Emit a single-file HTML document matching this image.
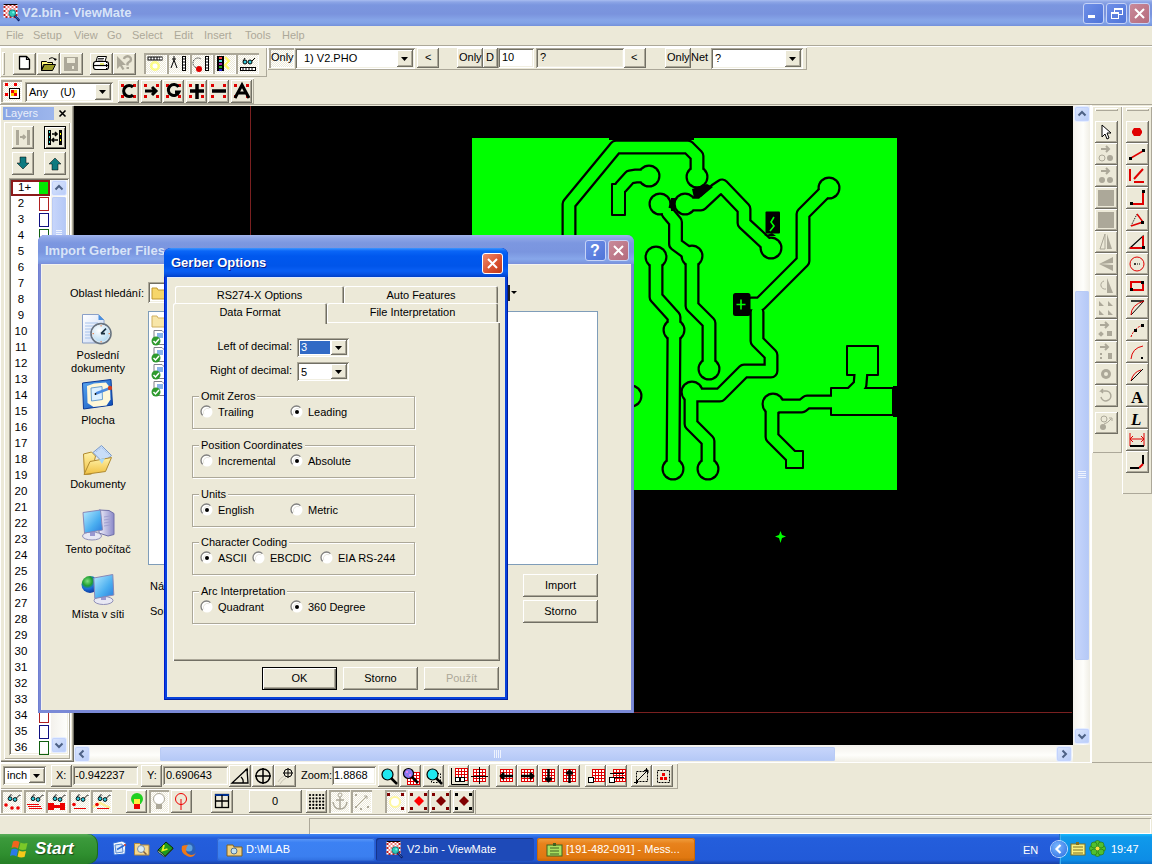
<!DOCTYPE html><html><head><meta charset="utf-8"><style>
*{margin:0;padding:0;box-sizing:border-box}
html,body{width:1152px;height:864px;overflow:hidden;background:#ECE9D8;font-family:"Liberation Sans",sans-serif;font-size:11px;color:#000}
.a{position:absolute}
.t{position:absolute;white-space:nowrap;line-height:13px}
.rb{position:absolute;background:#ECE9D8;box-shadow:inset -1px -1px #716F64,inset 1px 1px #FFF,inset -2px -2px #ACA899}
.sk{position:absolute;background:#fff;box-shadow:inset 1px 1px #ACA899,inset -1px -1px #FFF,inset 2px 2px #716F64,inset -2px -2px #F1EFE2}
.ck{position:absolute;background-color:#F5F4EE;box-shadow:inset 1px 1px #716F64,inset -1px -1px #FFF,inset 2px 2px #ACA899}
.etch{position:absolute;border:1px solid #ACA899;box-shadow:1px 1px #FFF, inset 1px 1px #FFF}
svg{position:absolute;overflow:visible}
</style></head><body>
<div class="a" style="left:0;top:0;width:1152px;height:26px;background:linear-gradient(to bottom,#A9BDF0 0px,#8CA5E6 2px,#7B96DF 5px,#7A93DD 14px,#86A5E8 20px,#82A2E6 23px,#7390DA 26px)"></div>
<svg style="left:3px;top:3px" width="18" height="19" viewBox="0 0 18 19"><g transform="translate(0.5,1)"><rect x="0" y="0" width="14" height="13.5" fill="#fff"/><rect x="0" y="2" width="2" height="2" fill="#C02020"/><rect x="0" y="6" width="2" height="2" fill="#C02020"/><rect x="0" y="10" width="2" height="2" fill="#C02020"/><rect x="2" y="0" width="2" height="2" fill="#C02020"/><rect x="2" y="4" width="2" height="2" fill="#F08080"/><rect x="2" y="8" width="2" height="2" fill="#F08080"/><rect x="2" y="12" width="2" height="2" fill="#C02020"/><rect x="4" y="2" width="2" height="2" fill="#F08080"/><rect x="4" y="6" width="2" height="2" fill="#F08080"/><rect x="4" y="10" width="2" height="2" fill="#F08080"/><rect x="6" y="0" width="2" height="2" fill="#C02020"/><rect x="6" y="4" width="2" height="2" fill="#F08080"/><rect x="6" y="8" width="2" height="2" fill="#F08080"/><rect x="6" y="12" width="2" height="2" fill="#C02020"/><rect x="8" y="2" width="2" height="2" fill="#F08080"/><rect x="8" y="6" width="2" height="2" fill="#F08080"/><rect x="8" y="10" width="2" height="2" fill="#F08080"/><rect x="10" y="0" width="2" height="2" fill="#C02020"/><rect x="10" y="4" width="2" height="2" fill="#F08080"/><rect x="10" y="8" width="2" height="2" fill="#F08080"/><rect x="10" y="12" width="2" height="2" fill="#C02020"/><rect x="12" y="2" width="2" height="2" fill="#C02020"/><rect x="12" y="6" width="2" height="2" fill="#C02020"/><rect x="12" y="10" width="2" height="2" fill="#C02020"/><rect x="0" y="0" width="14" height="1" fill="#100000"/></g><circle cx="9.3" cy="10.2" r="3.4" fill="#30C8B8" stroke="#0A6A70" stroke-width="0.8"/><circle cx="10.3" cy="9.4" r="1.1" fill="#70F8F0"/><path d="M11.8 12.8l4.5 5" stroke="#0A1A60" stroke-width="2.2"/><path d="M12.3 13.3l3.5 3.8" stroke="#4A8AE0" stroke-width="0.7"/></svg>
<div class="t" style="left:22px;top:5px;font-size:13px;font-weight:bold;color:#D8E4F8;line-height:16px">V2.bin - ViewMate</div>
<div class="a" style="left:1083px;top:3px;width:21px;height:21px;border-radius:3px;border:1px solid #C6D3F7;background:linear-gradient(135deg,#6E8FE8,#4F74D8)"></div><div class="a" style="left:1088px;top:15px;width:7px;height:3px;background:#fff"></div>
<div class="a" style="left:1106px;top:3px;width:21px;height:21px;border-radius:3px;border:1px solid #C6D3F7;background:linear-gradient(135deg,#6E8FE8,#4F74D8)"></div><div class="a" style="left:1114px;top:8px;width:9px;height:7px;border:1px solid #fff;border-top-width:2px"></div><div class="a" style="left:1111px;top:12px;width:8px;height:7px;border:1px solid #fff;border-top-width:2px;background:#5C80DE"></div>
<div class="a" style="left:1129px;top:3px;width:21px;height:21px;border-radius:3px;border:1px solid #C6D3F7;background:linear-gradient(135deg,#C98A9A,#B56B7C)"></div><svg style="left:1129px;top:3px" width="21" height="21"><path d="M6 6L15 15M15 6L6 15" stroke="#fff" stroke-width="2"/></svg>
<div class="t" style="left:6px;top:29px;color:#ACA899">File</div>
<div class="t" style="left:33px;top:29px;color:#ACA899">Setup</div>
<div class="t" style="left:74px;top:29px;color:#ACA899">View</div>
<div class="t" style="left:107px;top:29px;color:#ACA899">Go</div>
<div class="t" style="left:132px;top:29px;color:#ACA899">Select</div>
<div class="t" style="left:174px;top:29px;color:#ACA899">Edit</div>
<div class="t" style="left:204px;top:29px;color:#ACA899">Insert</div>
<div class="t" style="left:245px;top:29px;color:#ACA899">Tools</div>
<div class="t" style="left:282px;top:29px;color:#ACA899">Help</div>
<div class="a" style="left:0;top:45px;width:1152px;height:1px;background:#ACA899"></div>
<div class="a" style="left:0;top:46px;width:1152px;height:1px;background:#fff"></div>
<div class="a" style="left:74px;top:106px;width:999px;height:639px;background:#000"></div>
<div class="a" style="left:0;top:104px;width:1152px;height:1px;background:#ACA899"></div>
<div class="a" style="left:250px;top:106px;width:1px;height:140px;background:#7A2020"></div>
<div class="a" style="left:600px;top:712px;width:472px;height:1px;background:#7A2020"></div>
<div class="a" style="left:0px;top:47px;width:267px;height:30px;box-shadow:inset 1px 1px #FFF,inset -1px -1px #ACA899"></div>
<div class="a" style="left:2px;top:52px;width:3px;height:23px;box-shadow:inset 1px 1px #FFF,inset -1px -1px #ACA899"></div>
<div class="rb" style="left:13px;top:53px;width:23px;height:22px"></div>
<svg style="left:13px;top:53px" width="23" height="22" viewBox="0 0 23 22"><path d="M6.5 3.5h7l3 3v9.5h-10z" fill="#fff" stroke="#000" stroke-width="1.3" stroke-linejoin="round"/><path d="M13.5 3.5v3h3" fill="none" stroke="#000" stroke-width="1.2"/></svg>
<div class="rb" style="left:37px;top:53px;width:23px;height:22px"></div>
<svg style="left:37px;top:53px" width="23" height="22" viewBox="0 0 23 22"><path d="M4.5 8.5h5l1 1h5v2h-9l-2 6z" fill="#FFF87A" stroke="#000"/><path d="M4.5 17.5l3-6h11l-3 6z" fill="#9C9C2A" stroke="#000"/><path d="M12 6q4-3 6 1" fill="none" stroke="#000"/><path d="M17 5l1 3 2-2" fill="#000"/></svg>
<div class="rb" style="left:60px;top:53px;width:23px;height:22px"></div>
<svg style="left:60px;top:53px" width="23" height="22" viewBox="0 0 23 22"><rect x="4" y="4" width="14" height="14" fill="#ACA899"/><rect x="7" y="5" width="8" height="5" fill="#ECE9D8"/><rect x="12" y="13" width="2" height="3" fill="#ECE9D8"/></svg>
<div class="rb" style="left:90px;top:53px;width:23px;height:22px"></div>
<svg style="left:90px;top:53px" width="23" height="22" viewBox="0 0 23 22"><path d="M7.5 3.5h9l-1.5 5h-9z" fill="#fff" stroke="#000"/><path d="M8 5.5h6M7.5 7h6" stroke="#000" stroke-width="0.8"/><rect x="3.5" y="8.5" width="15" height="8" rx="2.5" fill="#fff" stroke="#000" stroke-width="1.2"/><path d="M4 12.5h14" stroke="#000" stroke-width="1.2"/><path d="M10 11h4" stroke="#D8E020" stroke-width="1.2"/><path d="M16.5 9v7" stroke="#000" stroke-dasharray="1 1"/></svg>
<div class="rb" style="left:113px;top:53px;width:23px;height:22px"></div>
<svg style="left:113px;top:53px" width="23" height="22" viewBox="0 0 23 22"><path d="M4 3v13l3-3 2.5 4 2-1-2.5-4h4z" fill="#ACA899"/><path d="M11 6a3.5 3 0 1 1 5 3l-1.5 1.5v2" stroke="#ACA899" stroke-width="2.4" fill="none"/><rect x="13.5" y="14" width="2.5" height="2" fill="#ACA899"/></svg>
<div class="a" style="left:144px;top:53px;width:23px;height:21px;background-color:#F4F3EE;background-image:repeating-conic-gradient(#FFFFFF 0 25%,#ECE9D8 0 50%);background-size:2px 2px;box-shadow:inset 1px 1px #ACA899,inset 2px 2px #ACA899,inset -1px -1px #FFF"></div>
<svg style="left:144px;top:53px" width="23" height="21" viewBox="0 0 23 21"><rect x="3.5" y="3.5" width="15" height="4" fill="#000"/><g fill="#fff"><rect x="4.5" y="4.5" width="2" height="2"/><rect x="7.5" y="4.5" width="2" height="2"/><rect x="10.5" y="4.5" width="2" height="2"/><rect x="13.5" y="4.5" width="2" height="2"/><rect x="16" y="4.5" width="2" height="2"/></g><circle cx="11" cy="13" r="5" fill="#FFFF60" opacity="0.7"/><circle cx="11" cy="13" r="2.5" fill="#fff"/></svg>
<div class="a" style="left:167px;top:53px;width:23px;height:21px;background-color:#F4F3EE;background-image:repeating-conic-gradient(#FFFFFF 0 25%,#ECE9D8 0 50%);background-size:2px 2px;box-shadow:inset 1px 1px #ACA899,inset 2px 2px #ACA899,inset -1px -1px #FFF"></div>
<svg style="left:167px;top:53px" width="23" height="21" viewBox="0 0 23 21"><path d="M7 3v4M5 6h4M7 7l-3 8M7 7l3 8" stroke="#000" fill="none"/><rect x="15.5" y="3.5" width="3" height="14" fill="#fff" stroke="#000" stroke-width="1"/><path d="M15 6h4M15 9h4M15 12h4M15 15h4" stroke="#000"/></svg>
<div class="a" style="left:190px;top:53px;width:23px;height:21px;background-color:#F4F3EE;background-image:repeating-conic-gradient(#FFFFFF 0 25%,#ECE9D8 0 50%);background-size:2px 2px;box-shadow:inset 1px 1px #ACA899,inset 2px 2px #ACA899,inset -1px -1px #FFF"></div>
<svg style="left:190px;top:53px" width="23" height="21" viewBox="0 0 23 21"><path d="M8 15a5 5 0 1 1 3-9" stroke="#000" stroke-dasharray="1 1" fill="none"/><circle cx="9" cy="16" r="3" fill="#D00"/><rect x="15.5" y="3.5" width="3" height="14" fill="#fff" stroke="#000"/><path d="M15 6h4M15 9h4M15 12h4M15 15h4" stroke="#000"/></svg>
<div class="a" style="left:213px;top:53px;width:23px;height:21px;background-color:#F4F3EE;background-image:repeating-conic-gradient(#FFFFFF 0 25%,#ECE9D8 0 50%);background-size:2px 2px;box-shadow:inset 1px 1px #ACA899,inset 2px 2px #ACA899,inset -1px -1px #FFF"></div>
<svg style="left:213px;top:53px" width="23" height="21" viewBox="0 0 23 21"><rect x="4" y="3" width="7" height="15" fill="#000"/><rect x="6" y="4" width="3" height="2" fill="#F44"/><rect x="6" y="7" width="3" height="2" fill="#5DD"/><rect x="6" y="10" width="3" height="2" fill="#A2A"/><rect x="6" y="13" width="3" height="2" fill="#2A2"/><rect x="6" y="16" width="3" height="2" fill="#22C"/><path d="M12 4l4 4-4 4 4 4" stroke="#FFF860" stroke-width="2" fill="none"/></svg>
<div class="a" style="left:236px;top:53px;width:23px;height:21px;background-color:#F4F3EE;background-image:repeating-conic-gradient(#FFFFFF 0 25%,#ECE9D8 0 50%);background-size:2px 2px;box-shadow:inset 1px 1px #ACA899,inset 2px 2px #ACA899,inset -1px -1px #FFF"></div>
<svg style="left:236px;top:53px" width="23" height="21" viewBox="0 0 23 21"><circle cx="9" cy="9" r="2" fill="#3CD" stroke="#000"/><circle cx="14" cy="9" r="2" fill="#3CD" stroke="#000"/><path d="M7 8l2-3M16 8l3-3" stroke="#000"/><rect x="4.5" y="14.5" width="15" height="3" fill="#fff" stroke="#000"/><path d="M7 14v4M10 14v4M13 14v4M16 14v4" stroke="#000"/></svg>
<div class="a" style="left:267px;top:47px;width:540px;height:23px;box-shadow:inset 1px 1px #FFF,inset -1px -1px #ACA899"></div>
<div class="a" style="left:268px;top:50px;width:3px;height:18px;box-shadow:inset 1px 1px #FFF,inset -1px -1px #ACA899"></div>
<div class="a" style="left:269px;top:48px;width:25px;height:20px;background-color:#F4F3EE;background-image:repeating-conic-gradient(#FFFFFF 0 25%,#ECE9D8 0 50%);background-size:2px 2px;box-shadow:inset 1px 1px #ACA899,inset 2px 2px #ACA899,inset -1px -1px #FFF"></div>
<div class="t" style="left:271px;top:51px">Only</div>
<div class="sk" style="left:295px;top:48px;width:120px;height:21px"></div>
<div class="t" style="left:304px;top:52px">1) V2.PHO</div>
<div class="rb" style="left:397px;top:50px;width:16px;height:17px"></div>
<svg style="left:397px;top:50px" width="16" height="17" viewBox="0 0 16 17"><path d="M4 7h7l-3.5 4z" fill="#000"/></svg>
<div class="rb" style="left:417px;top:48px;width:22px;height:20px"></div>
<div class="t" style="left:425px;top:51px">&lt;</div>
<div class="rb" style="left:457px;top:48px;width:26px;height:20px"></div>
<div class="t" style="left:459px;top:51px">Only</div>
<div class="rb" style="left:483px;top:48px;width:15px;height:20px"></div>
<div class="t" style="left:486px;top:51px">D</div>
<div class="sk" style="left:498px;top:48px;width:36px;height:20px"></div>
<div class="t" style="left:502px;top:51px">10</div>
<div class="sk" style="left:536px;top:48px;width:88px;height:20px;background:#ECE9D8"></div>
<div class="t" style="left:540px;top:51px">?</div>
<div class="rb" style="left:624px;top:48px;width:22px;height:20px"></div>
<div class="t" style="left:631px;top:51px">&lt;</div>
<div class="rb" style="left:665px;top:48px;width:26px;height:20px"></div>
<div class="t" style="left:667px;top:51px">Only</div>
<div class="t" style="left:691px;top:51px">Net</div>
<div class="sk" style="left:711px;top:48px;width:92px;height:21px"></div>
<div class="t" style="left:715px;top:52px">?</div>
<div class="rb" style="left:785px;top:50px;width:16px;height:17px"></div>
<svg style="left:785px;top:50px" width="16" height="17" viewBox="0 0 16 17"><path d="M4 7h7l-3.5 4z" fill="#000"/></svg>
<div class="a" style="left:0px;top:78px;width:254px;height:26px;box-shadow:inset 1px 1px #FFF,inset -1px -1px #ACA899"></div>
<div class="a" style="left:1px;top:80px;width:21px;height:22px;background-color:#F4F3EE;background-image:repeating-conic-gradient(#FFFFFF 0 25%,#ECE9D8 0 50%);background-size:2px 2px;box-shadow:inset 1px 1px #ACA899,inset 2px 2px #ACA899,inset -1px -1px #FFF"></div>
<svg style="left:1px;top:80px" width="21" height="22" viewBox="0 0 21 22"><g fill="#E00"><rect x="4" y="3" width="3" height="3"/><rect x="13" y="3" width="3" height="3"/><rect x="4" y="13" width="3" height="3"/></g><rect x="8.5" y="8.5" width="10" height="10" fill="#fff" stroke="#000"/><rect x="10" y="10" width="3" height="3" fill="#E00"/><rect x="13" y="13" width="3" height="3" fill="#E00"/><rect x="13" y="10" width="3" height="3" fill="#FC0"/><rect x="10" y="13" width="3" height="3" fill="#FC0"/></svg>
<div class="sk" style="left:25px;top:82px;width:88px;height:20px"></div>
<div class="t" style="left:29px;top:86px">Any&nbsp;&nbsp;&nbsp;&nbsp;(U)</div>
<div class="rb" style="left:95px;top:84px;width:16px;height:16px"></div>
<svg style="left:95px;top:84px" width="16" height="16" viewBox="0 0 16 16"><path d="M4 6h7l-3.5 4z" fill="#000"/></svg>
<div class="rb" style="left:118px;top:80px;width:21px;height:23px"></div>
<svg style="left:118px;top:80px" width="21" height="23" viewBox="0 0 21 23"><g fill="#D00"><rect x="3" y="4" width="3" height="3"/><rect x="15" y="4" width="3" height="3"/><rect x="3" y="15" width="3" height="3"/><rect x="15" y="15" width="3" height="3"/></g><path d="M15 7a5.5 5.5 0 1 0 0 8" stroke="#000" stroke-width="3.2" fill="none"/></svg>
<div class="rb" style="left:141px;top:80px;width:21px;height:23px"></div>
<svg style="left:141px;top:80px" width="21" height="23" viewBox="0 0 21 23"><g fill="#D00"><rect x="3" y="4" width="3" height="3"/><rect x="15" y="4" width="3" height="3"/><rect x="3" y="15" width="3" height="3"/><rect x="15" y="15" width="3" height="3"/></g><path d="M4 11h10M11 7l4 4-4 4" stroke="#000" stroke-width="3" fill="none"/></svg>
<div class="rb" style="left:163px;top:80px;width:21px;height:23px"></div>
<svg style="left:163px;top:80px" width="21" height="23" viewBox="0 0 21 23"><g fill="#D00"><rect x="3" y="4" width="3" height="3"/><rect x="15" y="4" width="3" height="3"/><rect x="3" y="15" width="3" height="3"/><rect x="15" y="15" width="3" height="3"/></g><path d="M15.5 7a5.5 5.5 0 1 0 0.5 5h-4" stroke="#000" stroke-width="3" fill="none"/></svg>
<div class="rb" style="left:186px;top:80px;width:21px;height:23px"></div>
<svg style="left:186px;top:80px" width="21" height="23" viewBox="0 0 21 23"><g fill="#D00"><rect x="3" y="4" width="3" height="3"/><rect x="15" y="4" width="3" height="3"/><rect x="3" y="15" width="3" height="3"/><rect x="15" y="15" width="3" height="3"/></g><path d="M4 11h14M11 4v15" stroke="#000" stroke-width="3.5"/></svg>
<div class="rb" style="left:208px;top:80px;width:21px;height:23px"></div>
<svg style="left:208px;top:80px" width="21" height="23" viewBox="0 0 21 23"><g fill="#D00"><rect x="3" y="4" width="3" height="3"/><rect x="15" y="4" width="3" height="3"/><rect x="3" y="15" width="3" height="3"/><rect x="15" y="15" width="3" height="3"/></g><path d="M4 11h14" stroke="#000" stroke-width="3.5"/></svg>
<div class="rb" style="left:231px;top:80px;width:21px;height:23px"></div>
<svg style="left:231px;top:80px" width="21" height="23" viewBox="0 0 21 23"><g fill="#D00"><rect x="3" y="4" width="3" height="3"/><rect x="15" y="4" width="3" height="3"/><rect x="3" y="15" width="3" height="3"/><rect x="15" y="15" width="3" height="3"/></g><path d="M4 18l7-13 7 13M7 13h8" stroke="#000" stroke-width="3" fill="none"/></svg>
<svg style="left:0;top:0" width="1152" height="864" viewBox="0 0 1152 864"><rect x="472" y="138" width="425" height="352" fill="#00FF00"/><g fill="none" stroke="#000" stroke-width="15" stroke-linejoin="round" stroke-linecap="round"><path d="M697,177 L697,156 L688,147 L616,147 L569,204 L569,320"/><path d="M649,176 L636,176 L630,177 L621,187"/><path d="M685,204 L701,204 L716,190 L722,186 L744,209 L744,223 L771,248"/><path d="M668,213 L675.5,222 L675.5,244 L692,256"/><path d="M656,257 L656,297 L674,317 L674,330 L673,469"/><path d="M692,256 L692,306 L709,323 L709,369"/><path d="M829,188 L803,214 L803,261 L760,304 L751,304"/><path d="M757,312 L757,341 L771,355 L771,371 L744,371 L720,395 L691,395"/><path d="M691,395 L691,424 L708,441 L708,469"/><path d="M772,406 L802,406 L807,402 L840,402"/><path d="M772,406 L772,437 L792,457"/><path d="M862,360 L860,385 L850,395"/></g><g fill="#000"><circle cx="697" cy="177" r="11.5"/><circle cx="649" cy="176" r="11.5"/><circle cx="660" cy="204" r="11.5"/><circle cx="685" cy="204" r="11.5"/><circle cx="771" cy="248" r="11.5"/><circle cx="656" cy="257" r="11.5"/><circle cx="674" cy="330" r="11.5"/><circle cx="692" cy="256" r="11.5"/><circle cx="709" cy="369" r="11.5"/><circle cx="829" cy="188" r="11.5"/><circle cx="673" cy="469" r="11.5"/><circle cx="708" cy="469" r="11.5"/><circle cx="631" cy="396" r="11.5"/><circle cx="692" cy="392" r="11.5"/><circle cx="773" cy="404" r="11.5"/><rect x="611" y="183" width="15" height="33" rx="1"/><rect x="785" y="450" width="19" height="19" rx="1"/><rect x="846" y="345" width="33" height="31" rx="1"/><rect x="830" y="387" width="64" height="29" rx="1"/></g><g fill="none" stroke="#00FF00" stroke-width="10.5" stroke-linejoin="round" stroke-linecap="round"><path d="M697,177 L697,156 L688,147 L616,147 L569,204 L569,320"/><path d="M649,176 L636,176 L630,177 L621,187"/><path d="M685,204 L701,204 L716,190 L722,186 L744,209 L744,223 L771,248"/><path d="M668,213 L675.5,222 L675.5,244 L692,256"/><path d="M656,257 L656,297 L674,317 L674,330 L673,469"/><path d="M692,256 L692,306 L709,323 L709,369"/><path d="M829,188 L803,214 L803,261 L760,304 L751,304"/><path d="M757,312 L757,341 L771,355 L771,371 L744,371 L720,395 L691,395"/><path d="M691,395 L691,424 L708,441 L708,469"/><path d="M772,406 L802,406 L807,402 L840,402"/><path d="M772,406 L772,437 L792,457"/><path d="M862,360 L860,385 L850,395"/></g><g fill="#00FF00"><circle cx="697" cy="177" r="9.3"/><circle cx="649" cy="176" r="9.3"/><circle cx="660" cy="204" r="9.3"/><circle cx="685" cy="204" r="9.3"/><circle cx="771" cy="248" r="9.3"/><circle cx="656" cy="257" r="9.3"/><circle cx="674" cy="330" r="9.3"/><circle cx="692" cy="256" r="9.3"/><circle cx="709" cy="369" r="9.3"/><circle cx="829" cy="188" r="9.3"/><circle cx="673" cy="469" r="9.3"/><circle cx="708" cy="469" r="9.3"/><circle cx="631" cy="396" r="9.3"/><circle cx="692" cy="392" r="9.3"/><circle cx="773" cy="404" r="9.3"/><rect x="613" y="185" width="11" height="29"/><rect x="787" y="452" width="15" height="15"/><rect x="848" y="347" width="29" height="27"/><rect x="832" y="389" width="60" height="25"/></g><rect x="733" y="293" width="17.5" height="23" rx="2.5" fill="#000"/><path d="M741 299.5v10M736.5 304.5h9" stroke="#00FF00" stroke-width="1.6"/><rect x="765.5" y="211.5" width="14.5" height="22" rx="1" fill="#000"/><path d="M774 217l-3 5 3 4-4 5" stroke="#00FF00" stroke-width="1.6" fill="none"/><path d="M764 236l8-3 4 3z" fill="#000"/><rect x="609" y="138" width="85" height="2" fill="#000"/><path d="M692 189L707 184 713 187 701 197 694 198z" fill="#000"/><rect x="671" y="198" width="4" height="13" fill="#000"/><rect x="893" y="386" width="4" height="31" fill="#000"/><path d="M780.5 531l1.5 4 4 1.5-4 1.5-1.5 5-1.5-5-4-1.5 4-1.5z" fill="#00FF00"/></svg>
<div class="a" style="left:0;top:105px;width:74px;height:657px;background:#ECE9D8;box-shadow:inset 1px 1px #FFF,inset -1px -1px #716F64,inset -2px -2px #ACA899"></div>
<div class="a" style="left:3px;top:107px;width:51px;height:13px;background:linear-gradient(to right,#8AA6E4,#9DB6EC)"></div>
<div class="t" style="left:5px;top:107px;color:#E8EEFA;font-size:11px">Layers</div>
<svg style="left:59px;top:110px" width="7" height="7" viewBox="0 0 7 7"><path d="M0.5 0.5l6 6M6.5 0.5l-6 6" stroke="#000" stroke-width="1.6"/></svg>
<div class="a" style="left:4px;top:122px;width:66px;height:637px;box-shadow:inset 1px 1px #FFF,inset -1px -1px #ACA899,1px 1px #FFF,inset 2px 2px #ECE9D8"></div>
<div class="rb" style="left:12px;top:126px;width:22px;height:23px"></div>
<svg style="left:12px;top:126px" width="22" height="23" viewBox="0 0 22 23"><rect x="4" y="4" width="3" height="15" fill="#ACA899"/><rect x="15" y="4" width="3" height="15" fill="#ACA899"/><path d="M8 11h5M11 9l2 2-2 2" stroke="#ACA899" stroke-width="2" fill="none"/></svg>
<div class="a" style="left:44px;top:126px;width:22px;height:23px;background:#ECE9D8;border:1px solid #000;box-shadow:inset 1px 1px #fff,inset -1px -1px #716F64"></div>
<svg style="left:44px;top:126px" width="22" height="23" viewBox="0 0 22 23"><rect x="4" y="4" width="3" height="15" fill="#000"/><rect x="15" y="4" width="3" height="15" fill="#000"/><g fill="#3DD"><rect x="5" y="5" width="1" height="2"/><rect x="5" y="10" width="1" height="2"/><rect x="5" y="15" width="1" height="2"/></g><g fill="#FF0"><rect x="16" y="7" width="1" height="2"/><rect x="16" y="13" width="1" height="2"/></g><path d="M8 8h5M11 6l2 2-2 2M14 14h-5M10 12l-2 2 2 2" stroke="#000" stroke-width="1.6" fill="none"/></svg>
<div class="rb" style="left:12px;top:152px;width:22px;height:23px"></div>
<svg style="left:12px;top:152px" width="22" height="23" viewBox="0 0 22 23"><path d="M8 5h6v6h3l-6 6-6-6h3z" fill="#0E7A80" stroke="#000" stroke-width="0.5"/></svg>
<div class="rb" style="left:44px;top:152px;width:22px;height:23px"></div>
<svg style="left:44px;top:152px" width="22" height="23" viewBox="0 0 22 23"><path d="M8 18h6v-6h3l-6-6-6 6h3z" fill="#0E7A80" stroke="#000" stroke-width="0.5"/></svg>
<div class="sk" style="left:9px;top:178px;width:60px;height:577px"></div>
<div class="t" style="left:18px;top:180px;font-size:11.5px;line-height:14px">1+</div>
<div class="a" style="left:11px;top:180px;width:39px;height:16px;border:2px solid #8B1A1A"></div>
<div class="a" style="left:39px;top:182px;width:9px;height:12px;background:#00E800"></div>
<div class="t" style="left:9px;top:196px;width:24px;text-align:center;font-size:11.5px;line-height:14px">2</div>
<div class="a" style="left:39px;top:197px;width:10px;height:14px;border:1px solid #B02020"></div>
<div class="t" style="left:9px;top:212px;width:24px;text-align:center;font-size:11.5px;line-height:14px">3</div>
<div class="a" style="left:39px;top:213px;width:10px;height:14px;border:1px solid #101080"></div>
<div class="t" style="left:9px;top:228px;width:24px;text-align:center;font-size:11.5px;line-height:14px">4</div>
<div class="a" style="left:39px;top:229px;width:10px;height:14px;border:1px solid #106010"></div>
<div class="t" style="left:9px;top:244px;width:24px;text-align:center;font-size:11.5px;line-height:14px">5</div>
<div class="t" style="left:9px;top:260px;width:24px;text-align:center;font-size:11.5px;line-height:14px">6</div>
<div class="t" style="left:9px;top:276px;width:24px;text-align:center;font-size:11.5px;line-height:14px">7</div>
<div class="t" style="left:9px;top:292px;width:24px;text-align:center;font-size:11.5px;line-height:14px">8</div>
<div class="t" style="left:9px;top:308px;width:24px;text-align:center;font-size:11.5px;line-height:14px">9</div>
<div class="t" style="left:9px;top:324px;width:24px;text-align:center;font-size:11.5px;line-height:14px">10</div>
<div class="t" style="left:9px;top:340px;width:24px;text-align:center;font-size:11.5px;line-height:14px">11</div>
<div class="t" style="left:9px;top:356px;width:24px;text-align:center;font-size:11.5px;line-height:14px">12</div>
<div class="t" style="left:9px;top:372px;width:24px;text-align:center;font-size:11.5px;line-height:14px">13</div>
<div class="t" style="left:9px;top:388px;width:24px;text-align:center;font-size:11.5px;line-height:14px">14</div>
<div class="t" style="left:9px;top:404px;width:24px;text-align:center;font-size:11.5px;line-height:14px">15</div>
<div class="t" style="left:9px;top:420px;width:24px;text-align:center;font-size:11.5px;line-height:14px">16</div>
<div class="t" style="left:9px;top:436px;width:24px;text-align:center;font-size:11.5px;line-height:14px">17</div>
<div class="t" style="left:9px;top:452px;width:24px;text-align:center;font-size:11.5px;line-height:14px">18</div>
<div class="t" style="left:9px;top:468px;width:24px;text-align:center;font-size:11.5px;line-height:14px">19</div>
<div class="t" style="left:9px;top:484px;width:24px;text-align:center;font-size:11.5px;line-height:14px">20</div>
<div class="t" style="left:9px;top:500px;width:24px;text-align:center;font-size:11.5px;line-height:14px">21</div>
<div class="t" style="left:9px;top:516px;width:24px;text-align:center;font-size:11.5px;line-height:14px">22</div>
<div class="t" style="left:9px;top:532px;width:24px;text-align:center;font-size:11.5px;line-height:14px">23</div>
<div class="t" style="left:9px;top:548px;width:24px;text-align:center;font-size:11.5px;line-height:14px">24</div>
<div class="t" style="left:9px;top:564px;width:24px;text-align:center;font-size:11.5px;line-height:14px">25</div>
<div class="t" style="left:9px;top:580px;width:24px;text-align:center;font-size:11.5px;line-height:14px">26</div>
<div class="t" style="left:9px;top:596px;width:24px;text-align:center;font-size:11.5px;line-height:14px">27</div>
<div class="t" style="left:9px;top:612px;width:24px;text-align:center;font-size:11.5px;line-height:14px">28</div>
<div class="t" style="left:9px;top:628px;width:24px;text-align:center;font-size:11.5px;line-height:14px">29</div>
<div class="t" style="left:9px;top:644px;width:24px;text-align:center;font-size:11.5px;line-height:14px">30</div>
<div class="t" style="left:9px;top:660px;width:24px;text-align:center;font-size:11.5px;line-height:14px">31</div>
<div class="t" style="left:9px;top:676px;width:24px;text-align:center;font-size:11.5px;line-height:14px">32</div>
<div class="t" style="left:9px;top:692px;width:24px;text-align:center;font-size:11.5px;line-height:14px">33</div>
<div class="t" style="left:9px;top:708px;width:24px;text-align:center;font-size:11.5px;line-height:14px">34</div>
<div class="a" style="left:39px;top:709px;width:10px;height:14px;border:1px solid #B02020"></div>
<div class="t" style="left:9px;top:724px;width:24px;text-align:center;font-size:11.5px;line-height:14px">35</div>
<div class="a" style="left:39px;top:725px;width:10px;height:14px;border:1px solid #101080"></div>
<div class="t" style="left:9px;top:740px;width:24px;text-align:center;font-size:11.5px;line-height:14px">36</div>
<div class="a" style="left:39px;top:741px;width:10px;height:14px;border:1px solid #106010"></div>
<div class="a" style="left:51px;top:180px;width:16px;height:573px;background:linear-gradient(to right,#F3F1EC,#FEFEFB)"></div>
<div class="a" style="left:52px;top:181px;width:14px;height:14px;border-radius:2px;background:linear-gradient(135deg,#DCE6FC,#B8CCF8);box-shadow:inset 0 0 0 1px #C3D3FD,0 0 0 1px #E6EEFE"></div><svg style="left:52px;top:181px" width="14" height="14" viewBox="0 0 14 14"><path d="M3.5 8.5l3.5-3.5 3.5 3.5" stroke="#4D6185" stroke-width="2" fill="none"/></svg>
<div class="a" style="left:52px;top:197px;width:14px;height:60px;border-radius:2px;background:linear-gradient(to right,#C8D6FB,#B4C8F6);box-shadow:inset 0 0 0 1px #B9CBF5"></div>
<div class="a" style="left:56px;top:230px;width:6px;height:1px;background:#EEF3FE;box-shadow:0 2px #EEF3FE,0 4px #EEF3FE"></div>
<div class="a" style="left:52px;top:738px;width:14px;height:14px;border-radius:2px;background:linear-gradient(135deg,#DCE6FC,#B8CCF8);box-shadow:inset 0 0 0 1px #C3D3FD,0 0 0 1px #E6EEFE"></div><svg style="left:52px;top:738px" width="14" height="14" viewBox="0 0 14 14"><path d="M3.5 5.5l3.5 3.5 3.5-3.5" stroke="#4D6185" stroke-width="2" fill="none"/></svg>
<div class="a" style="left:1073px;top:105px;width:17px;height:640px;background:linear-gradient(to right,#F3F1EC,#FEFEFB 60%,#F0EEE5)"></div>
<div class="a" style="left:1075px;top:107px;width:14px;height:14px;border-radius:2px;background:linear-gradient(135deg,#DCE6FC,#B8CCF8);box-shadow:inset 0 0 0 1px #C3D3FD,0 0 0 1px #E6EEFE"></div><svg style="left:1075px;top:107px" width="14" height="14" viewBox="0 0 14 14"><path d="M3.5 8.5l3.5-3.5 3.5 3.5" stroke="#4D6185" stroke-width="2" fill="none"/></svg>
<div class="a" style="left:1075px;top:291px;width:14px;height:369px;border-radius:2px;background:linear-gradient(to right,#C8D6FB,#B4C8F6);box-shadow:inset 0 0 0 1px #B9CBF5"></div>
<div class="a" style="left:1078px;top:471px;width:8px;height:1px;background:#EEF3FE;box-shadow:0 2px #EEF3FE,0 4px #EEF3FE,0 6px #EEF3FE"></div>
<div class="a" style="left:1075px;top:729px;width:14px;height:14px;border-radius:2px;background:linear-gradient(135deg,#DCE6FC,#B8CCF8);box-shadow:inset 0 0 0 1px #C3D3FD,0 0 0 1px #E6EEFE"></div><svg style="left:1075px;top:729px" width="14" height="14" viewBox="0 0 14 14"><path d="M3.5 5.5l3.5 3.5 3.5-3.5" stroke="#4D6185" stroke-width="2" fill="none"/></svg>
<div class="a" style="left:74px;top:745px;width:999px;height:17px;background:linear-gradient(to bottom,#F3F1EC,#FEFEFB 60%,#F0EEE5)"></div>
<div class="a" style="left:75px;top:747px;width:14px;height:14px;border-radius:2px;background:linear-gradient(135deg,#DCE6FC,#B8CCF8);box-shadow:inset 0 0 0 1px #C3D3FD,0 0 0 1px #E6EEFE"></div><svg style="left:75px;top:747px" width="14" height="14" viewBox="0 0 14 14"><path d="M8.5 3.5l-3.5 3.5 3.5 3.5" stroke="#4D6185" stroke-width="2" fill="none"/></svg>
<div class="a" style="left:160px;top:747px;width:675px;height:14px;border-radius:2px;background:linear-gradient(to bottom,#C8D6FB,#B4C8F6);box-shadow:inset 0 0 0 1px #B9CBF5"></div>
<div class="a" style="left:494px;top:750px;width:1px;height:8px;background:#EEF3FE;box-shadow:2px 0 #EEF3FE,4px 0 #EEF3FE,6px 0 #EEF3FE"></div>
<div class="a" style="left:1057px;top:747px;width:14px;height:14px;border-radius:2px;background:linear-gradient(135deg,#DCE6FC,#B8CCF8);box-shadow:inset 0 0 0 1px #C3D3FD,0 0 0 1px #E6EEFE"></div><svg style="left:1057px;top:747px" width="14" height="14" viewBox="0 0 14 14"><path d="M5.5 3.5l3.5 3.5-3.5 3.5" stroke="#4D6185" stroke-width="2" fill="none"/></svg>
<div class="a" style="left:1073px;top:745px;width:17px;height:17px;background:#ECE9D8"></div>
<div class="a" style="left:1090px;top:105px;width:62px;height:658px;background:#ECE9D8;box-shadow:inset 2px 0 #FFF,inset 0 -1px #ACA899"></div>
<div class="a" style="left:1092px;top:106px;width:30px;height:347px;box-shadow:inset 1px 1px #FFF,inset -1px -1px #ACA899"></div>
<div class="a" style="left:1122px;top:106px;width:30px;height:388px;box-shadow:inset 1px 1px #FFF,inset -1px -1px #ACA899"></div>
<div class="a" style="left:1095px;top:108px;width:23px;height:3px;box-shadow:inset 1px 1px #FFF,inset -1px -1px #ACA899"></div>
<div class="a" style="left:1126px;top:108px;width:23px;height:3px;box-shadow:inset 1px 1px #FFF,inset -1px -1px #ACA899"></div>
<div class="rb" style="left:1095px;top:121px;width:23px;height:22px"></div>
<svg style="left:1095px;top:121px" width="23" height="22" viewBox="0 0 23 22"><path d="M7 4v12l3-3 2 5 2-1-2-5h4z" fill="#fff" stroke="#000"/></svg>
<div class="rb" style="left:1095px;top:143px;width:23px;height:22px"></div>
<svg style="left:1095px;top:143px" width="23" height="22" viewBox="0 0 23 22"><path d="M6 6h8M11 3l3 3-3 3" stroke="#ACA899" stroke-width="2" fill="none"/><circle cx="7" cy="15" r="3" fill="none" stroke="#ACA899"/><circle cx="15" cy="15" r="3" fill="#ACA899"/></svg>
<div class="rb" style="left:1095px;top:165px;width:23px;height:22px"></div>
<svg style="left:1095px;top:165px" width="23" height="22" viewBox="0 0 23 22"><path d="M6 6h8M11 3l3 3-3 3" stroke="#ACA899" stroke-width="2" fill="none"/><circle cx="7" cy="15" r="3" fill="#ACA899"/><circle cx="15" cy="15" r="3" fill="#ACA899"/></svg>
<div class="rb" style="left:1095px;top:187px;width:23px;height:22px"></div>
<svg style="left:1095px;top:187px" width="23" height="22" viewBox="0 0 23 22"><rect x="3" y="3" width="16" height="16" fill="#ACA899"/></svg>
<div class="rb" style="left:1095px;top:209px;width:23px;height:22px"></div>
<svg style="left:1095px;top:209px" width="23" height="22" viewBox="0 0 23 22"><rect x="3" y="3" width="16" height="16" fill="#ACA899"/></svg>
<div class="rb" style="left:1095px;top:231px;width:23px;height:22px"></div>
<svg style="left:1095px;top:231px" width="23" height="22" viewBox="0 0 23 22"><path d="M10 3v15H5zM12 3v15h5z" fill="#ACA899"/><path d="M10 3v15H5z" fill="#ECE9D8" stroke="#ACA899"/></svg>
<div class="rb" style="left:1095px;top:253px;width:23px;height:22px"></div>
<svg style="left:1095px;top:253px" width="23" height="22" viewBox="0 0 23 22"><path d="M18 4v6L4 11zM18 12v6L4 11z" fill="#ACA899"/></svg>
<div class="rb" style="left:1095px;top:275px;width:23px;height:22px"></div>
<svg style="left:1095px;top:275px" width="23" height="22" viewBox="0 0 23 22"><path d="M12 3v15h6z" fill="#ACA899"/><path d="M9 6a4 4 0 1 0 2 8" stroke="#ACA899" fill="none"/></svg>
<div class="rb" style="left:1095px;top:297px;width:23px;height:22px"></div>
<svg style="left:1095px;top:297px" width="23" height="22" viewBox="0 0 23 22"><g fill="#ACA899"><path d="M4 4l5 5H4zM13 4l5 5h-5zM4 13l5 5H4zM13 13l5 5h-5z"/></g></svg>
<div class="rb" style="left:1095px;top:319px;width:23px;height:22px"></div>
<svg style="left:1095px;top:319px" width="23" height="22" viewBox="0 0 23 22"><path d="M5 6h8M10 3l3 3-3 3" stroke="#ACA899" stroke-width="2" fill="none"/><g fill="#ACA899"><rect x="4" y="13" width="4" height="4" transform="rotate(45 6 15)"/><rect x="12" y="12" width="5" height="5"/></g></svg>
<div class="rb" style="left:1095px;top:341px;width:23px;height:22px"></div>
<svg style="left:1095px;top:341px" width="23" height="22" viewBox="0 0 23 22"><path d="M5 6h8M10 3l3 3-3 3" stroke="#ACA899" stroke-width="2" fill="none"/><g fill="#ACA899"><rect x="5" y="12" width="2" height="2"/><rect x="5" y="16" width="2" height="2"/><rect x="13" y="12" width="4" height="6"/></g></svg>
<div class="rb" style="left:1095px;top:363px;width:23px;height:22px"></div>
<svg style="left:1095px;top:363px" width="23" height="22" viewBox="0 0 23 22"><circle cx="11" cy="11" r="5" fill="#ACA899"/><circle cx="11" cy="11" r="2" fill="#ECE9D8"/></svg>
<div class="rb" style="left:1095px;top:385px;width:23px;height:22px"></div>
<svg style="left:1095px;top:385px" width="23" height="22" viewBox="0 0 23 22"><path d="M6 12a5 5 0 1 0 4-6h-4l2-2M6 6l2 2" stroke="#ACA899" stroke-width="1.5" fill="none"/></svg>
<div class="rb" style="left:1095px;top:412px;width:23px;height:22px"></div>
<svg style="left:1095px;top:412px" width="23" height="22" viewBox="0 0 23 22"><circle cx="9" cy="7" r="3" fill="none" stroke="#ACA899"/><circle cx="8" cy="15" r="3" fill="#ACA899"/><path d="M9 12q4-1 7-5M14 6h3v3" stroke="#ACA899" fill="none"/></svg>
<div class="rb" style="left:1126px;top:121px;width:23px;height:22px"></div>
<svg style="left:1126px;top:121px" width="23" height="22" viewBox="0 0 23 22"><path d="M8 7h6l2 3v2l-2 3H8l-2-3v-2z" fill="#E00000"/></svg>
<div class="rb" style="left:1126px;top:143px;width:23px;height:22px"></div>
<svg style="left:1126px;top:143px" width="23" height="22" viewBox="0 0 23 22"><path d="M5 15L17 8" stroke="#E00000" stroke-width="1.5"/><rect x="3" y="14" width="3" height="3" fill="#000"/><rect x="16" y="6" width="3" height="3" fill="#000"/></svg>
<div class="rb" style="left:1126px;top:165px;width:23px;height:22px"></div>
<svg style="left:1126px;top:165px" width="23" height="22" viewBox="0 0 23 22"><path d="M17 4L8 14M4 4v12M8 17h10" stroke="#E00000" stroke-width="2"/></svg>
<div class="rb" style="left:1126px;top:187px;width:23px;height:22px"></div>
<svg style="left:1126px;top:187px" width="23" height="22" viewBox="0 0 23 22"><path d="M17 4v13H5" stroke="#E00000" stroke-width="2" fill="none"/><rect x="16" y="3" width="3" height="3" fill="#000"/><rect x="4" y="15" width="3" height="3" fill="#000"/></svg>
<div class="rb" style="left:1126px;top:209px;width:23px;height:22px"></div>
<svg style="left:1126px;top:209px" width="23" height="22" viewBox="0 0 23 22"><path d="M5 17L11 5" stroke="#000" stroke-dasharray="1 1"/><path d="M5 17l12-4-6-8" stroke="#E00000" stroke-width="1.5" fill="none"/><rect x="15" y="12" width="3" height="3" fill="#000"/></svg>
<div class="rb" style="left:1126px;top:231px;width:23px;height:22px"></div>
<svg style="left:1126px;top:231px" width="23" height="22" viewBox="0 0 23 22"><path d="M4 17L17 5v12z" fill="none" stroke="#000" stroke-width="1.2"/><path d="M17 5v12H4" stroke="#E00000" stroke-width="2" fill="none"/><rect x="16" y="15" width="3" height="3" fill="#000"/></svg>
<div class="rb" style="left:1126px;top:253px;width:23px;height:22px"></div>
<svg style="left:1126px;top:253px" width="23" height="22" viewBox="0 0 23 22"><circle cx="11" cy="11" r="7" fill="none" stroke="#E00000"/><path d="M8 11h2M9 10v2" stroke="#000"/><path d="M11 11h4" stroke="#000" stroke-dasharray="1 1"/></svg>
<div class="rb" style="left:1126px;top:275px;width:23px;height:22px"></div>
<svg style="left:1126px;top:275px" width="23" height="22" viewBox="0 0 23 22"><rect x="5" y="7" width="12" height="8" fill="none" stroke="#E00000" stroke-width="2"/><rect x="15" y="6" width="3" height="3" fill="#000"/><rect x="4" y="13" width="3" height="3" fill="#000"/></svg>
<div class="rb" style="left:1126px;top:297px;width:23px;height:22px"></div>
<svg style="left:1126px;top:297px" width="23" height="22" viewBox="0 0 23 22"><path d="M5 4h13" stroke="#000" stroke-width="1.5"/><path d="M5 18L18 4" stroke="#000"/><path d="M5 18q0-10 13-14" stroke="#E00000" fill="none"/></svg>
<div class="rb" style="left:1126px;top:319px;width:23px;height:22px"></div>
<svg style="left:1126px;top:319px" width="23" height="22" viewBox="0 0 23 22"><path d="M5 18q3-9 12-12" stroke="#E00000" stroke-dasharray="2 1" fill="none"/><rect x="8" y="10" width="3" height="3" fill="#000"/><rect x="15" y="5" width="3" height="3" fill="#000"/></svg>
<div class="rb" style="left:1126px;top:341px;width:23px;height:22px"></div>
<svg style="left:1126px;top:341px" width="23" height="22" viewBox="0 0 23 22"><path d="M5 18q1-11 12-13" stroke="#E00000" fill="none"/><rect x="15" y="16" width="2" height="2" fill="#000"/></svg>
<div class="rb" style="left:1126px;top:363px;width:23px;height:22px"></div>
<svg style="left:1126px;top:363px" width="23" height="22" viewBox="0 0 23 22"><path d="M5 18q2-9 10-11" stroke="#E00000" fill="none"/><path d="M5 18L17 6" stroke="#000"/></svg>
<div class="rb" style="left:1126px;top:385px;width:23px;height:22px"></div>
<svg style="left:1126px;top:385px" width="23" height="22" viewBox="0 0 23 22"><text x="5" y="18" font-family="Liberation Serif" font-weight="bold" font-size="17" fill="#000">A</text></svg>
<div class="rb" style="left:1126px;top:407px;width:23px;height:22px"></div>
<svg style="left:1126px;top:407px" width="23" height="22" viewBox="0 0 23 22"><text x="5" y="18" font-family="Liberation Serif" font-weight="bold" font-style="italic" font-size="17" fill="#000">L</text></svg>
<div class="rb" style="left:1126px;top:429px;width:23px;height:22px"></div>
<svg style="left:1126px;top:429px" width="23" height="22" viewBox="0 0 23 22"><path d="M4 4v13M18 4v13M4 10h14M4 10l3-3M4 10l3 3M18 10l-3-3M18 10l-3 3" stroke="#E00000" fill="none"/><rect x="4" y="16" width="14" height="2" fill="#000"/></svg>
<div class="rb" style="left:1126px;top:451px;width:23px;height:22px"></div>
<svg style="left:1126px;top:451px" width="23" height="22" viewBox="0 0 23 22"><path d="M17 4v9" stroke="#000" stroke-width="2"/><path d="M17 13l-4 4" stroke="#E00000" stroke-width="2"/><path d="M13 17H4" stroke="#000" stroke-width="2"/></svg>
<div class="a" style="left:0;top:762px;width:1090px;height:1px;background:#FFF"></div>
<div class="a" style="left:0px;top:763px;width:678px;height:26px;box-shadow:inset 1px 1px #FFF,inset -1px -1px #ACA899"></div>
<div class="sk" style="left:3px;top:766px;width:43px;height:19px"></div>
<div class="t" style="left:7px;top:769px">inch</div>
<div class="rb" style="left:29px;top:768px;width:16px;height:15px"></div>
<svg style="left:29px;top:768px" width="16" height="15" viewBox="0 0 16 15"><path d="M4 6h7l-3.5 4z" fill="#000"/></svg>
<div class="rb" style="left:51px;top:765px;width:21px;height:22px"></div>
<div class="t" style="left:56px;top:769px">X:</div>
<div class="sk" style="left:73px;top:766px;width:65px;height:19px;background:#ECE9D8"></div>
<div class="t" style="left:75px;top:769px">-0.942237</div>
<div class="rb" style="left:141px;top:765px;width:21px;height:22px"></div>
<div class="t" style="left:147px;top:769px">Y:</div>
<div class="sk" style="left:163px;top:766px;width:65px;height:19px;background:#ECE9D8"></div>
<div class="t" style="left:166px;top:769px">0.690643</div>
<div class="rb" style="left:229px;top:765px;width:22px;height:22px"></div>
<svg style="left:229px;top:765px" width="22" height="22" viewBox="0 0 22 22"><path d="M3 18h16L18 4zM12 12a6 6 0 0 1 2 6" stroke="#000" stroke-width="1.3" fill="none"/><path d="M16 4h3v3" fill="#000"/></svg>
<div class="rb" style="left:252px;top:765px;width:22px;height:22px"></div>
<svg style="left:252px;top:765px" width="22" height="22" viewBox="0 0 22 22"><circle cx="11" cy="11" r="7" fill="none" stroke="#000" stroke-width="1.5"/><path d="M11 3v16M3 11h16" stroke="#000" stroke-width="1.5"/></svg>
<div class="rb" style="left:274px;top:765px;width:22px;height:22px"></div>
<svg style="left:274px;top:765px" width="22" height="22" viewBox="0 0 22 22"><circle cx="14" cy="8" r="4" fill="none" stroke="#000"/><path d="M14 3v10M9 8h10" stroke="#000"/><path d="M4 17q2-4 6-6M6 19q2-4 6-6" stroke="#C8C4B4" fill="none"/></svg>
<div class="t" style="left:301px;top:769px">Zoom:</div>
<div class="sk" style="left:332px;top:766px;width:44px;height:19px"></div>
<div class="t" style="left:334px;top:769px">1.8868</div>
<div class="rb" style="left:378px;top:765px;width:21px;height:22px"></div>
<svg style="left:378px;top:765px" width="21" height="22" viewBox="0 0 21 22"><circle cx="9.5" cy="9.5" r="5.5" fill="#1FE8F0" stroke="#000" stroke-width="1.2"/><path d="M13 13l6 6" stroke="#000" stroke-width="2.5"/></svg>
<div class="rb" style="left:400px;top:765px;width:21px;height:22px"></div>
<svg style="left:400px;top:765px" width="21" height="22" viewBox="0 0 21 22"><rect x="7" y="7" width="13" height="13" fill="#E00000"/><rect x="8" y="8" width="2" height="2" fill="#fff"/><rect x="8" y="11" width="2" height="2" fill="#fff"/><rect x="8" y="14" width="2" height="2" fill="#fff"/><rect x="8" y="17" width="2" height="2" fill="#fff"/><rect x="11" y="8" width="2" height="2" fill="#fff"/><rect x="11" y="11" width="2" height="2" fill="#fff"/><rect x="11" y="14" width="2" height="2" fill="#fff"/><rect x="11" y="17" width="2" height="2" fill="#fff"/><rect x="14" y="8" width="2" height="2" fill="#fff"/><rect x="14" y="11" width="2" height="2" fill="#fff"/><rect x="14" y="14" width="2" height="2" fill="#fff"/><rect x="14" y="17" width="2" height="2" fill="#fff"/><rect x="17" y="8" width="2" height="2" fill="#fff"/><rect x="17" y="11" width="2" height="2" fill="#fff"/><rect x="17" y="14" width="2" height="2" fill="#fff"/><rect x="17" y="17" width="2" height="2" fill="#fff"/><circle cx="8.5" cy="8.5" r="5" fill="#8A7AF0" stroke="#000" stroke-width="1.2"/><rect x="6" y="6" width="2" height="2" fill="#E080F0"/><rect x="9" y="9" width="2" height="2" fill="#E080F0"/><path d="M12 12l6 6" stroke="#000" stroke-width="2.5"/></svg>
<div class="rb" style="left:423px;top:765px;width:21px;height:22px"></div>
<svg style="left:423px;top:765px" width="21" height="22" viewBox="0 0 21 22"><rect x="8.5" y="8.5" width="9" height="9" fill="none" stroke="#000" stroke-dasharray="1.5 1.5"/><circle cx="9.5" cy="9.5" r="5.5" fill="#1FE8F0" stroke="#000" stroke-width="1.2"/><path d="M13 13l6 6" stroke="#000" stroke-width="2.5"/></svg>
<div class="rb" style="left:448px;top:765px;width:21px;height:22px"></div>
<svg style="left:448px;top:765px" width="21" height="22" viewBox="0 0 21 22"><rect x="7" y="3" width="13" height="13" fill="#E00000"/><rect x="8" y="4" width="2" height="2" fill="#fff"/><rect x="8" y="7" width="2" height="2" fill="#fff"/><rect x="8" y="10" width="2" height="2" fill="#fff"/><rect x="8" y="13" width="2" height="2" fill="#fff"/><rect x="11" y="4" width="2" height="2" fill="#fff"/><rect x="11" y="7" width="2" height="2" fill="#fff"/><rect x="11" y="10" width="2" height="2" fill="#fff"/><rect x="11" y="13" width="2" height="2" fill="#fff"/><rect x="14" y="4" width="2" height="2" fill="#fff"/><rect x="14" y="7" width="2" height="2" fill="#fff"/><rect x="14" y="10" width="2" height="2" fill="#fff"/><rect x="14" y="13" width="2" height="2" fill="#fff"/><rect x="17" y="4" width="2" height="2" fill="#fff"/><rect x="17" y="7" width="2" height="2" fill="#fff"/><rect x="17" y="10" width="2" height="2" fill="#fff"/><rect x="17" y="13" width="2" height="2" fill="#fff"/><path d="M3.5 3v16.5H20" stroke="#000" fill="none"/><rect x="7.5" y="12.5" width="4" height="4" fill="#fff" stroke="#000"/><rect x="12.5" y="12.5" width="4" height="4" fill="#fff" stroke="#000"/></svg>
<div class="rb" style="left:469px;top:765px;width:21px;height:22px"></div>
<svg style="left:469px;top:765px" width="21" height="22" viewBox="0 0 21 22"><rect x="4" y="4" width="13" height="13" fill="#E00000"/><rect x="5" y="5" width="2" height="2" fill="#fff"/><rect x="5" y="8" width="2" height="2" fill="#fff"/><rect x="5" y="11" width="2" height="2" fill="#fff"/><rect x="5" y="14" width="2" height="2" fill="#fff"/><rect x="8" y="5" width="2" height="2" fill="#fff"/><rect x="8" y="8" width="2" height="2" fill="#fff"/><rect x="8" y="11" width="2" height="2" fill="#fff"/><rect x="8" y="14" width="2" height="2" fill="#fff"/><rect x="11" y="5" width="2" height="2" fill="#fff"/><rect x="11" y="8" width="2" height="2" fill="#fff"/><rect x="11" y="11" width="2" height="2" fill="#fff"/><rect x="11" y="14" width="2" height="2" fill="#fff"/><rect x="14" y="5" width="2" height="2" fill="#fff"/><rect x="14" y="8" width="2" height="2" fill="#fff"/><rect x="14" y="11" width="2" height="2" fill="#fff"/><rect x="14" y="14" width="2" height="2" fill="#fff"/><path d="M2 11.5h17M10.5 2v17" stroke="#000"/></svg>
<div class="rb" style="left:496px;top:765px;width:21px;height:22px"></div>
<svg style="left:496px;top:765px" width="21" height="22" viewBox="0 0 21 22"><rect x="4" y="4" width="13" height="13" fill="#E00000"/><rect x="5" y="5" width="2" height="2" fill="#fff"/><rect x="5" y="8" width="2" height="2" fill="#fff"/><rect x="5" y="11" width="2" height="2" fill="#fff"/><rect x="5" y="14" width="2" height="2" fill="#fff"/><rect x="8" y="5" width="2" height="2" fill="#fff"/><rect x="8" y="8" width="2" height="2" fill="#fff"/><rect x="8" y="11" width="2" height="2" fill="#fff"/><rect x="8" y="14" width="2" height="2" fill="#fff"/><rect x="11" y="5" width="2" height="2" fill="#fff"/><rect x="11" y="8" width="2" height="2" fill="#fff"/><rect x="11" y="11" width="2" height="2" fill="#fff"/><rect x="11" y="14" width="2" height="2" fill="#fff"/><rect x="14" y="5" width="2" height="2" fill="#fff"/><rect x="14" y="8" width="2" height="2" fill="#fff"/><rect x="14" y="11" width="2" height="2" fill="#fff"/><rect x="14" y="14" width="2" height="2" fill="#fff"/><path d="M5 11h12M8 8l-3 3 3 3" stroke="#000" stroke-width="2.5" fill="none"/></svg>
<div class="rb" style="left:517px;top:765px;width:21px;height:22px"></div>
<svg style="left:517px;top:765px" width="21" height="22" viewBox="0 0 21 22"><rect x="4" y="4" width="13" height="13" fill="#E00000"/><rect x="5" y="5" width="2" height="2" fill="#fff"/><rect x="5" y="8" width="2" height="2" fill="#fff"/><rect x="5" y="11" width="2" height="2" fill="#fff"/><rect x="5" y="14" width="2" height="2" fill="#fff"/><rect x="8" y="5" width="2" height="2" fill="#fff"/><rect x="8" y="8" width="2" height="2" fill="#fff"/><rect x="8" y="11" width="2" height="2" fill="#fff"/><rect x="8" y="14" width="2" height="2" fill="#fff"/><rect x="11" y="5" width="2" height="2" fill="#fff"/><rect x="11" y="8" width="2" height="2" fill="#fff"/><rect x="11" y="11" width="2" height="2" fill="#fff"/><rect x="11" y="14" width="2" height="2" fill="#fff"/><rect x="14" y="5" width="2" height="2" fill="#fff"/><rect x="14" y="8" width="2" height="2" fill="#fff"/><rect x="14" y="11" width="2" height="2" fill="#fff"/><rect x="14" y="14" width="2" height="2" fill="#fff"/><path d="M4 11h12M13 8l3 3-3 3" stroke="#000" stroke-width="2.5" fill="none"/></svg>
<div class="rb" style="left:538px;top:765px;width:21px;height:22px"></div>
<svg style="left:538px;top:765px" width="21" height="22" viewBox="0 0 21 22"><rect x="4" y="4" width="13" height="13" fill="#E00000"/><rect x="5" y="5" width="2" height="2" fill="#fff"/><rect x="5" y="8" width="2" height="2" fill="#fff"/><rect x="5" y="11" width="2" height="2" fill="#fff"/><rect x="5" y="14" width="2" height="2" fill="#fff"/><rect x="8" y="5" width="2" height="2" fill="#fff"/><rect x="8" y="8" width="2" height="2" fill="#fff"/><rect x="8" y="11" width="2" height="2" fill="#fff"/><rect x="8" y="14" width="2" height="2" fill="#fff"/><rect x="11" y="5" width="2" height="2" fill="#fff"/><rect x="11" y="8" width="2" height="2" fill="#fff"/><rect x="11" y="11" width="2" height="2" fill="#fff"/><rect x="11" y="14" width="2" height="2" fill="#fff"/><rect x="14" y="5" width="2" height="2" fill="#fff"/><rect x="14" y="8" width="2" height="2" fill="#fff"/><rect x="14" y="11" width="2" height="2" fill="#fff"/><rect x="14" y="14" width="2" height="2" fill="#fff"/><path d="M10.5 4v12M7.5 13l3 3 3-3" stroke="#000" stroke-width="2.5" fill="none"/></svg>
<div class="rb" style="left:559px;top:765px;width:21px;height:22px"></div>
<svg style="left:559px;top:765px" width="21" height="22" viewBox="0 0 21 22"><rect x="4" y="4" width="13" height="13" fill="#E00000"/><rect x="5" y="5" width="2" height="2" fill="#fff"/><rect x="5" y="8" width="2" height="2" fill="#fff"/><rect x="5" y="11" width="2" height="2" fill="#fff"/><rect x="5" y="14" width="2" height="2" fill="#fff"/><rect x="8" y="5" width="2" height="2" fill="#fff"/><rect x="8" y="8" width="2" height="2" fill="#fff"/><rect x="8" y="11" width="2" height="2" fill="#fff"/><rect x="8" y="14" width="2" height="2" fill="#fff"/><rect x="11" y="5" width="2" height="2" fill="#fff"/><rect x="11" y="8" width="2" height="2" fill="#fff"/><rect x="11" y="11" width="2" height="2" fill="#fff"/><rect x="11" y="14" width="2" height="2" fill="#fff"/><rect x="14" y="5" width="2" height="2" fill="#fff"/><rect x="14" y="8" width="2" height="2" fill="#fff"/><rect x="14" y="11" width="2" height="2" fill="#fff"/><rect x="14" y="14" width="2" height="2" fill="#fff"/><path d="M10.5 18V6M7.5 9l3-3 3 3" stroke="#000" stroke-width="2.5" fill="none"/></svg>
<div class="rb" style="left:585px;top:765px;width:21px;height:22px"></div>
<svg style="left:585px;top:765px" width="21" height="22" viewBox="0 0 21 22"><rect x="7" y="4" width="13" height="13" fill="#E00000"/><rect x="8" y="5" width="2" height="2" fill="#fff"/><rect x="8" y="8" width="2" height="2" fill="#fff"/><rect x="8" y="11" width="2" height="2" fill="#fff"/><rect x="8" y="14" width="2" height="2" fill="#fff"/><rect x="11" y="5" width="2" height="2" fill="#fff"/><rect x="11" y="8" width="2" height="2" fill="#fff"/><rect x="11" y="11" width="2" height="2" fill="#fff"/><rect x="11" y="14" width="2" height="2" fill="#fff"/><rect x="14" y="5" width="2" height="2" fill="#fff"/><rect x="14" y="8" width="2" height="2" fill="#fff"/><rect x="14" y="11" width="2" height="2" fill="#fff"/><rect x="14" y="14" width="2" height="2" fill="#fff"/><rect x="17" y="5" width="2" height="2" fill="#fff"/><rect x="17" y="8" width="2" height="2" fill="#fff"/><rect x="17" y="11" width="2" height="2" fill="#fff"/><rect x="17" y="14" width="2" height="2" fill="#fff"/><rect x="3.5" y="12.5" width="5" height="5" fill="#fff" stroke="#000"/></svg>
<div class="rb" style="left:606px;top:765px;width:21px;height:22px"></div>
<svg style="left:606px;top:765px" width="21" height="22" viewBox="0 0 21 22"><rect x="7" y="4" width="13" height="13" fill="#E00000"/><rect x="8" y="5" width="2" height="2" fill="#fff"/><rect x="8" y="8" width="2" height="2" fill="#fff"/><rect x="8" y="11" width="2" height="2" fill="#fff"/><rect x="8" y="14" width="2" height="2" fill="#fff"/><rect x="11" y="5" width="2" height="2" fill="#fff"/><rect x="11" y="8" width="2" height="2" fill="#fff"/><rect x="11" y="11" width="2" height="2" fill="#fff"/><rect x="11" y="14" width="2" height="2" fill="#fff"/><rect x="14" y="5" width="2" height="2" fill="#fff"/><rect x="14" y="8" width="2" height="2" fill="#fff"/><rect x="14" y="11" width="2" height="2" fill="#fff"/><rect x="14" y="14" width="2" height="2" fill="#fff"/><rect x="17" y="5" width="2" height="2" fill="#fff"/><rect x="17" y="8" width="2" height="2" fill="#fff"/><rect x="17" y="11" width="2" height="2" fill="#fff"/><rect x="17" y="14" width="2" height="2" fill="#fff"/><rect x="3.5" y="12.5" width="5" height="5" fill="#fff" stroke="#000"/><path d="M4 8.5h14M6 12.5h12" stroke="#000"/></svg>
<div class="rb" style="left:631px;top:765px;width:21px;height:22px"></div>
<svg style="left:631px;top:765px" width="21" height="22" viewBox="0 0 21 22"><rect x="5.5" y="6.5" width="11" height="10" fill="none" stroke="#000" stroke-dasharray="2 1"/><path d="M5 17L17 5M14 5h3v3M3 17.5h4M5.5 15v4M15.5 3v4M13 5.5h4" stroke="#000"/></svg>
<div class="rb" style="left:652px;top:765px;width:21px;height:22px"></div>
<svg style="left:652px;top:765px" width="21" height="22" viewBox="0 0 21 22"><rect x="5.5" y="5.5" width="12" height="12" fill="none" stroke="#000" stroke-dasharray="2 1"/><g fill="#E00"><rect x="10" y="8" width="3" height="3"/><rect x="8" y="12" width="3" height="3"/><rect x="12" y="12" width="3" height="3"/></g></svg>
<div class="a" style="left:0px;top:789px;width:476px;height:26px;box-shadow:inset 1px 1px #FFF,inset -1px -1px #ACA899"></div>
<div class="a" style="left:1px;top:790px;width:21px;height:23px;background-color:#F4F3EE;background-image:repeating-conic-gradient(#FFFFFF 0 25%,#ECE9D8 0 50%);background-size:2px 2px;box-shadow:inset 1px 1px #ACA899,inset 2px 2px #ACA899,inset -1px -1px #FFF"></div>
<svg style="left:1px;top:790px" width="21" height="23" viewBox="0 0 21 23"><circle cx="9" cy="8.7" r="1.9" fill="#3CD" stroke="#000" stroke-width="0.9"/><circle cx="14" cy="9.5" r="1.9" fill="#3CD" stroke="#000" stroke-width="0.9"/><path d="M7.5 7.5l2.5-3 1 1M15.5 8l3-3 1 0.5" stroke="#000" stroke-width="0.9" fill="none"/><g fill="#E00"><circle cx="5" cy="15" r="1.8"/><circle cx="11" cy="18" r="1.8"/><circle cx="17" cy="18" r="1.8"/></g></svg>
<div class="a" style="left:24px;top:790px;width:21px;height:23px;background-color:#F4F3EE;background-image:repeating-conic-gradient(#FFFFFF 0 25%,#ECE9D8 0 50%);background-size:2px 2px;box-shadow:inset 1px 1px #ACA899,inset 2px 2px #ACA899,inset -1px -1px #FFF"></div>
<svg style="left:24px;top:790px" width="21" height="23" viewBox="0 0 21 23"><circle cx="9" cy="8.7" r="1.9" fill="#3CD" stroke="#000" stroke-width="0.9"/><circle cx="14" cy="9.5" r="1.9" fill="#3CD" stroke="#000" stroke-width="0.9"/><path d="M7.5 7.5l2.5-3 1 1M15.5 8l3-3 1 0.5" stroke="#000" stroke-width="0.9" fill="none"/><path d="M3 14.5h12M4 16.5h13M5 18.5h13" stroke="#E00"/></svg>
<div class="a" style="left:46px;top:790px;width:21px;height:23px;background-color:#F4F3EE;background-image:repeating-conic-gradient(#FFFFFF 0 25%,#ECE9D8 0 50%);background-size:2px 2px;box-shadow:inset 1px 1px #ACA899,inset 2px 2px #ACA899,inset -1px -1px #FFF"></div>
<svg style="left:46px;top:790px" width="21" height="23" viewBox="0 0 21 23"><circle cx="9" cy="8.7" r="1.9" fill="#3CD" stroke="#000" stroke-width="0.9"/><circle cx="14" cy="9.5" r="1.9" fill="#3CD" stroke="#000" stroke-width="0.9"/><path d="M7.5 7.5l2.5-3 1 1M15.5 8l3-3 1 0.5" stroke="#000" stroke-width="0.9" fill="none"/><path d="M2 13h6v2h6v-2h5v7h-5v-2H8v2H2z" fill="#E00"/></svg>
<div class="a" style="left:69px;top:790px;width:21px;height:23px;background-color:#F4F3EE;background-image:repeating-conic-gradient(#FFFFFF 0 25%,#ECE9D8 0 50%);background-size:2px 2px;box-shadow:inset 1px 1px #ACA899,inset 2px 2px #ACA899,inset -1px -1px #FFF"></div>
<svg style="left:69px;top:790px" width="21" height="23" viewBox="0 0 21 23"><circle cx="9" cy="8.7" r="1.9" fill="#3CD" stroke="#000" stroke-width="0.9"/><circle cx="14" cy="9.5" r="1.9" fill="#3CD" stroke="#000" stroke-width="0.9"/><path d="M7.5 7.5l2.5-3 1 1M15.5 8l3-3 1 0.5" stroke="#000" stroke-width="0.9" fill="none"/><circle cx="5" cy="14.5" r="1.8" fill="#E00"/><path d="M5 18.5h12" stroke="#E00"/></svg>
<div class="a" style="left:91px;top:790px;width:21px;height:23px;background-color:#F4F3EE;background-image:repeating-conic-gradient(#FFFFFF 0 25%,#ECE9D8 0 50%);background-size:2px 2px;box-shadow:inset 1px 1px #ACA899,inset 2px 2px #ACA899,inset -1px -1px #FFF"></div>
<svg style="left:91px;top:790px" width="21" height="23" viewBox="0 0 21 23"><circle cx="9" cy="8.7" r="1.9" fill="#3CD" stroke="#000" stroke-width="0.9"/><circle cx="14" cy="9.5" r="1.9" fill="#3CD" stroke="#000" stroke-width="0.9"/><path d="M7.5 7.5l2.5-3 1 1M15.5 8l3-3 1 0.5" stroke="#000" stroke-width="0.9" fill="none"/><path d="M2 17l7-4 10 5" stroke="#FFEE90" stroke-width="2.5" fill="none"/><circle cx="6" cy="14.5" r="1.8" fill="#E00"/><path d="M6 18.5h12" stroke="#E00"/></svg>
<div class="rb" style="left:126px;top:790px;width:21px;height:23px"></div>
<svg style="left:126px;top:790px" width="21" height="23" viewBox="0 0 21 23"><circle cx="11" cy="9" r="6" fill="#20D020"/><rect x="8" y="9" width="6" height="5" fill="#FFEE40"/><rect x="8" y="14" width="6" height="5" fill="#E00"/></svg>
<div class="a" style="left:149px;top:790px;width:20px;height:23px;background-color:#F4F3EE;background-image:repeating-conic-gradient(#FFFFFF 0 25%,#ECE9D8 0 50%);background-size:2px 2px;box-shadow:inset 1px 1px #ACA899,inset 2px 2px #ACA899,inset -1px -1px #FFF"></div>
<svg style="left:149px;top:790px" width="20" height="23" viewBox="0 0 20 23"><circle cx="10" cy="9" r="5.5" fill="#fff" stroke="#ACA899"/><rect x="7" y="14" width="6" height="5" fill="#ACA899"/></svg>
<div class="rb" style="left:171px;top:790px;width:21px;height:23px"></div>
<svg style="left:171px;top:790px" width="21" height="23" viewBox="0 0 21 23"><circle cx="10" cy="9" r="5.5" fill="none" stroke="#E00"/><path d="M10 9v11" stroke="#E00"/></svg>
<div class="rb" style="left:211px;top:790px;width:22px;height:23px"></div>
<svg style="left:211px;top:790px" width="22" height="23" viewBox="0 0 22 23"><rect x="4.5" y="4.5" width="13" height="13" fill="none" stroke="#000" stroke-width="1.3"/><path d="M4 5h14" stroke="#00308F" stroke-width="2"/><path d="M11 5v13M4 11h14" stroke="#000" stroke-width="1.3"/></svg>
<div class="rb" style="left:249px;top:790px;width:53px;height:23px"></div>
<div class="t" style="left:272px;top:795px">0</div>
<div class="rb" style="left:306px;top:790px;width:21px;height:23px"></div>
<svg style="left:306px;top:790px" width="21" height="23" viewBox="0 0 21 23"><circle cx="4.0" cy="5.0" r="1.1" fill="#000"/><circle cx="7.3" cy="5.0" r="1.1" fill="#000"/><circle cx="10.6" cy="5.0" r="1.1" fill="#000"/><circle cx="13.9" cy="5.0" r="1.1" fill="#000"/><circle cx="17.2" cy="5.0" r="1.1" fill="#000"/><circle cx="4.0" cy="8.3" r="1.1" fill="#000"/><circle cx="7.3" cy="8.3" r="1.1" fill="#000"/><circle cx="10.6" cy="8.3" r="1.1" fill="#000"/><circle cx="13.9" cy="8.3" r="1.1" fill="#000"/><circle cx="17.2" cy="8.3" r="1.1" fill="#000"/><circle cx="4.0" cy="11.6" r="1.1" fill="#000"/><circle cx="7.3" cy="11.6" r="1.1" fill="#000"/><circle cx="10.6" cy="11.6" r="1.1" fill="#000"/><circle cx="13.9" cy="11.6" r="1.1" fill="#000"/><circle cx="17.2" cy="11.6" r="1.1" fill="#000"/><circle cx="4.0" cy="14.9" r="1.1" fill="#000"/><circle cx="7.3" cy="14.9" r="1.1" fill="#000"/><circle cx="10.6" cy="14.9" r="1.1" fill="#000"/><circle cx="13.9" cy="14.9" r="1.1" fill="#000"/><circle cx="17.2" cy="14.9" r="1.1" fill="#000"/><circle cx="4.0" cy="18.2" r="1.1" fill="#000"/><circle cx="7.3" cy="18.2" r="1.1" fill="#000"/><circle cx="10.6" cy="18.2" r="1.1" fill="#000"/><circle cx="13.9" cy="18.2" r="1.1" fill="#000"/><circle cx="17.2" cy="18.2" r="1.1" fill="#000"/></svg>
<div class="a" style="left:329px;top:790px;width:21px;height:23px;background-color:#F4F3EE;background-image:repeating-conic-gradient(#FFFFFF 0 25%,#ECE9D8 0 50%);background-size:2px 2px;box-shadow:inset 1px 1px #ACA899,inset 2px 2px #ACA899,inset -1px -1px #FFF"></div>
<svg style="left:329px;top:790px" width="21" height="23" viewBox="0 0 21 23"><circle cx="11" cy="5" r="2" fill="none" stroke="#ACA899"/><path d="M11 7v12M4 12q1 7 7 7t7-7M7 10h8" stroke="#ACA899" stroke-width="1.5" fill="none"/></svg>
<div class="a" style="left:351px;top:790px;width:21px;height:23px;background-color:#F4F3EE;background-image:repeating-conic-gradient(#FFFFFF 0 25%,#ECE9D8 0 50%);background-size:2px 2px;box-shadow:inset 1px 1px #ACA899,inset 2px 2px #ACA899,inset -1px -1px #FFF"></div>
<svg style="left:351px;top:790px" width="21" height="23" viewBox="0 0 21 23"><path d="M6 16L16 6M13 6h3v3" stroke="#ACA899" fill="none"/><g fill="#ACA899"><path d="M4 4h2v2H4zM16 16h2v2h-2zM4 16h2v2H4zM9 18h2v2H9z"/></g></svg>
<div class="a" style="left:385px;top:790px;width:21px;height:23px;background-color:#F4F3EE;background-image:repeating-conic-gradient(#FFFFFF 0 25%,#ECE9D8 0 50%);background-size:2px 2px;box-shadow:inset 1px 1px #ACA899,inset 2px 2px #ACA899,inset -1px -1px #FFF"></div>
<svg style="left:385px;top:790px" width="21" height="23" viewBox="0 0 21 23"><g fill="#800000"><rect x="2" y="3" width="3" height="3"/><rect x="16" y="3" width="3" height="3"/><rect x="16" y="17" width="3" height="3"/></g><circle cx="10" cy="12" r="5" fill="#fff" stroke="#FFF8A0" stroke-width="2"/></svg>
<div class="rb" style="left:408px;top:790px;width:21px;height:23px"></div>
<svg style="left:408px;top:790px" width="21" height="23" viewBox="0 0 21 23"><g fill="#800000"><rect x="2" y="3" width="3" height="3"/><rect x="16" y="3" width="3" height="3"/><rect x="2" y="17" width="3" height="3"/><rect x="16" y="17" width="3" height="3"/></g><path d="M11 6l5 5-5 5-5-5z" fill="#F00"/></svg>
<div class="rb" style="left:430px;top:790px;width:21px;height:23px"></div>
<svg style="left:430px;top:790px" width="21" height="23" viewBox="0 0 21 23"><g fill="#800000"><rect x="2" y="3" width="3" height="3"/><rect x="16" y="3" width="3" height="3"/><rect x="2" y="17" width="3" height="3"/><rect x="16" y="17" width="3" height="3"/></g><path d="M11 6l5 5-5 5-5-5z" fill="#800000"/></svg>
<div class="rb" style="left:453px;top:790px;width:21px;height:23px"></div>
<svg style="left:453px;top:790px" width="21" height="23" viewBox="0 0 21 23"><g fill="#000"><rect x="2" y="3" width="3" height="3"/><rect x="16" y="3" width="3" height="3"/><rect x="2" y="17" width="3" height="3"/><rect x="16" y="17" width="3" height="3"/></g><path d="M11 6l5 5-5 5-5-5z" fill="#800000"/></svg>
<div class="a" style="left:0;top:814px;width:1152px;height:1px;background:#ACA899"></div>
<div class="a" style="left:0;top:815px;width:1152px;height:1px;background:#FFF"></div>
<div class="a" style="left:309px;top:818px;width:842px;height:16px;box-shadow:inset 1px 1px #ACA899,inset -1px -1px #FFF"></div>
<div class="a" style="left:0;top:834px;width:1152px;height:30px;background:linear-gradient(to bottom,#3C81F3 0px,#3A7FEF 1px,#245EDC 4px,#225AD8 26px,#1941A5 30px)"></div>
<div class="a" style="left:0;top:834px;width:98px;height:30px;border-radius:0 10px 10px 0;background:linear-gradient(to bottom,#5AAE5A 0px,#3C9A3C 4px,#2F8F2F 20px,#267F26 30px);box-shadow:inset -1px 0 #1E6A1E"></div>
<svg style="left:10px;top:840px" width="19" height="17" viewBox="0 0 19 17"><path d="M3 1.5q3-1.5 6.5 0.5l-1.5 6.5q-3.5-2-6.5-0.5z" fill="#F0641E"/><path d="M10.5 2.5q3 1.5 7 0.5l-1.5 6.5q-4 1-7-0.5z" fill="#7AC828"/><path d="M1.5 9.5q3-1.5 6.5 0.5l-1.5 6.5q-3.5-2-6.5-0.5z" fill="#2A7AE8"/><path d="M9 10.5q3 1.5 7 0.5l-1.5 6q-4 1-7-0.5z" fill="#F8C81A"/></svg>
<div class="t" style="left:35px;top:839px;font-size:17px;font-weight:bold;font-style:italic;color:#fff;line-height:19px;text-shadow:1px 1px 1px #1A4A1A">Start</div>
<svg style="left:111px;top:840px" width="16" height="16" viewBox="0 0 16 16"><path d="M2 3l9-2 4 2-1 11-11 1z" fill="#F4F8FF" stroke="#2A6AD8"/><path d="M4 5l7-1 1 8-7 1z" fill="#D8E8FA" stroke="#5A8AD0"/><path d="M6 9.5l7-4" stroke="#2A6AD8" stroke-width="1.5"/><circle cx="14" cy="5" r="1" fill="#D03020"/></svg>
<svg style="left:134px;top:841px" width="16" height="15" viewBox="0 0 16 15"><path d="M0.5 2.5h5l1.5 1.5h8v10H0.5z" fill="#F6D890" stroke="#B08A40"/><circle cx="7" cy="8" r="3.5" fill="#D8ECF8" stroke="#8090A0"/><path d="M9.5 10.5l3 3" stroke="#806040" stroke-width="1.5"/></svg>
<svg style="left:157px;top:841px" width="17" height="16" viewBox="0 0 17 16"><path d="M1 9l8-8 7 6-8 8z" fill="#1E9A1E" stroke="#0A2A0A"/><path d="M1 9v2l7 5 8-8V7l-8 8z" fill="#F0F8F0" stroke="#0A2A0A" stroke-width="0.8"/><path d="M7 4l-1.5 5.5 5-1.5" stroke="#E8F020" stroke-width="1.8" fill="none"/></svg>
<svg style="left:180px;top:841px" width="16" height="16" viewBox="0 0 16 16"><circle cx="8.5" cy="8" r="7" fill="#2A60B8"/><circle cx="9" cy="7" r="3.5" fill="#5AA0E0"/><path d="M2 5q-2 7 5 10t9-4q-1 3-5 3-5-1-5-5 0-3 2-5-4 0-6 1z" fill="#F07818"/></svg>
<div class="a" style="left:217px;top:838px;width:158px;height:23px;border-radius:3px;background:linear-gradient(to bottom,#5E9AF8,#3C81F3 20%,#3B7FF0 80%,#2F6FE0);box-shadow:inset 0 0 0 1px #2F64CF"></div>
<svg style="left:226px;top:842px" width="17" height="15" viewBox="0 0 17 15"><path d="M1 3h6l1 2h8v9H1z" fill="#F0D080" stroke="#806020"/><circle cx="8" cy="9" r="3" fill="#C0E0F0" stroke="#507090"/></svg>
<div class="t" style="left:246px;top:843px;color:#fff">D:\MLAB</div>
<div class="a" style="left:376px;top:838px;width:158px;height:23px;border-radius:3px;background:#1E4AB8;box-shadow:inset 1px 1px #15358A"></div>
<svg style="left:386px;top:840px" width="18" height="19" viewBox="0 0 18 19"><g transform="translate(0.5,1)"><rect x="0" y="0" width="14" height="13.5" fill="#fff"/><rect x="0" y="2" width="2" height="2" fill="#C02020"/><rect x="0" y="6" width="2" height="2" fill="#C02020"/><rect x="0" y="10" width="2" height="2" fill="#C02020"/><rect x="2" y="0" width="2" height="2" fill="#C02020"/><rect x="2" y="4" width="2" height="2" fill="#F08080"/><rect x="2" y="8" width="2" height="2" fill="#F08080"/><rect x="2" y="12" width="2" height="2" fill="#C02020"/><rect x="4" y="2" width="2" height="2" fill="#F08080"/><rect x="4" y="6" width="2" height="2" fill="#F08080"/><rect x="4" y="10" width="2" height="2" fill="#F08080"/><rect x="6" y="0" width="2" height="2" fill="#C02020"/><rect x="6" y="4" width="2" height="2" fill="#F08080"/><rect x="6" y="8" width="2" height="2" fill="#F08080"/><rect x="6" y="12" width="2" height="2" fill="#C02020"/><rect x="8" y="2" width="2" height="2" fill="#F08080"/><rect x="8" y="6" width="2" height="2" fill="#F08080"/><rect x="8" y="10" width="2" height="2" fill="#F08080"/><rect x="10" y="0" width="2" height="2" fill="#C02020"/><rect x="10" y="4" width="2" height="2" fill="#F08080"/><rect x="10" y="8" width="2" height="2" fill="#F08080"/><rect x="10" y="12" width="2" height="2" fill="#C02020"/><rect x="12" y="2" width="2" height="2" fill="#C02020"/><rect x="12" y="6" width="2" height="2" fill="#C02020"/><rect x="12" y="10" width="2" height="2" fill="#C02020"/><rect x="0" y="0" width="14" height="1" fill="#100000"/></g><circle cx="9.3" cy="10.2" r="3.4" fill="#30C8B8" stroke="#0A6A70" stroke-width="0.8"/><circle cx="10.3" cy="9.4" r="1.1" fill="#70F8F0"/><path d="M11.8 12.8l4.5 5" stroke="#0A1A60" stroke-width="2.2"/><path d="M12.3 13.3l3.5 3.8" stroke="#4A8AE0" stroke-width="0.7"/></svg>
<div class="t" style="left:407px;top:843px;color:#fff">V2.bin - ViewMate</div>
<div class="a" style="left:537px;top:838px;width:158px;height:23px;border-radius:3px;background:linear-gradient(to bottom,#F0A040,#E8821C 25%,#E07810 85%,#C86808);box-shadow:inset 0 0 0 1px #D06A00"></div>
<svg style="left:546px;top:842px" width="17" height="15" viewBox="0 0 17 15"><rect x="1" y="3" width="15" height="11" fill="#A8E060" stroke="#406020"/><path d="M4 6h9M4 9h9M4 12h9" stroke="#406020"/><rect x="7" y="1" width="3" height="3" fill="#406020"/></svg>
<div class="t" style="left:566px;top:843px;color:#fff">[191-482-091] - Mess...</div>
<div class="a" style="left:1059px;top:834px;width:93px;height:30px;background:linear-gradient(to bottom,#18BBFF 0px,#0F9AEB 3px,#0D8DE6 26px,#0A70C8 30px);box-shadow:inset 1px 0 #1D70C8,inset 2px 0 #40B0F0"></div>
<div class="a" style="left:1020px;top:843px;width:18px;height:14px;background:#2C62D8"></div>
<div class="t" style="left:1023px;top:844px;color:#fff">EN</div>
<div class="a" style="left:1051px;top:841px;width:16px;height:16px;border-radius:50%;background:radial-gradient(circle at 40% 35%,#7AB8FF,#2A6AE0);box-shadow:0 0 0 1px #C8E0FF"></div>
<svg style="left:1051px;top:841px" width="16" height="16" viewBox="0 0 16 16"><path d="M9.5 4l-4 4 4 4" stroke="#fff" stroke-width="2.2" fill="none"/></svg>
<svg style="left:1070px;top:841px" width="16" height="16" viewBox="0 0 16 16"><rect x="1" y="3" width="14" height="11" fill="#F8F080" stroke="#807020"/><path d="M3 6h10M3 9h10M3 12h10" stroke="#807020"/><rect x="6" y="1" width="3" height="3" fill="#807020"/></svg>
<svg style="left:1089px;top:840px" width="17" height="17" viewBox="0 0 17 17"><g fill="#50C030" stroke="#207010" stroke-width="0.6"><circle cx="8.5" cy="3.5" r="3"/><circle cx="8.5" cy="13.5" r="3"/><circle cx="3.5" cy="8.5" r="3"/><circle cx="13.5" cy="8.5" r="3"/><circle cx="5" cy="5" r="3"/><circle cx="12" cy="12" r="3"/><circle cx="12" cy="5" r="3"/><circle cx="5" cy="12" r="3"/></g><circle cx="8.5" cy="8.5" r="2" fill="#FFE040"/></svg>
<div class="t" style="left:1111px;top:843px;color:#fff">19:47</div>
<div class="a" style="left:38px;top:235px;width:596px;height:478px;border-radius:7px 7px 0 0;background:#7A89D6;box-shadow:inset 1px 0 #6F7FD2,inset -1px 0 #6F7FD2"></div>
<div class="a" style="left:38px;top:235px;width:596px;height:29px;border-radius:7px 7px 0 0;background:linear-gradient(to bottom,#A3B6EE 0px,#8DA5E6 3px,#7C97E0 8px,#7A95DF 17px,#87A7EA 24px,#7E9BE2 27px,#7A8FDA 29px)"></div>
<div class="a" style="left:41px;top:264px;width:590px;height:446px;background:#ECE9D8;box-shadow:inset 1px 1px #F4F3EE"></div>
<div class="t" style="left:45px;top:243px;font-size:13px;font-weight:bold;color:#D8E4F8;line-height:16px">Import Gerber Files</div>
<div class="a" style="left:585px;top:240px;width:21px;height:21px;border-radius:3px;border:1px solid #C6D3F7;background:linear-gradient(135deg,#6E8FE8,#4F74D8)"></div><div class="t" style="left:590px;top:242px;font-size:16px;font-weight:bold;color:#fff;line-height:17px">?</div>
<div class="a" style="left:608px;top:240px;width:21px;height:21px;border-radius:3px;border:1px solid #C6D3F7;background:linear-gradient(135deg,#C98A9A,#B56B7C)"></div><svg style="left:608px;top:240px" width="21" height="21"><path d="M6 6L15 15M15 6L6 15" stroke="#fff" stroke-width="2"/></svg>
<div class="t" style="left:70px;top:287px">Oblast hledání:</div>
<div class="sk" style="left:148px;top:282px;width:30px;height:21px"></div>
<svg style="left:151px;top:286px" width="16" height="14" viewBox="0 0 16 14"><path d="M1 2h5l1 2h8v9H1z" fill="#F6D66A" stroke="#C09830"/></svg>
<div class="a" style="left:508px;top:285px;width:2px;height:16px;background:#202020"></div>
<svg style="left:511px;top:291px" width="6" height="4" viewBox="0 0 6 4"><path d="M0 0h6l-3 3z" fill="#000"/></svg>
<div class="a" style="left:148px;top:311px;width:450px;height:254px;background:#fff;border:1px solid #7F9DB9"></div>
<svg style="left:151px;top:315px" width="16" height="13" viewBox="0 0 16 13"><path d="M1 1h5l1 2h8v9H1z" fill="#F8E6A8" stroke="#D0B060"/></svg>
<svg style="left:150px;top:330px" width="17" height="16" viewBox="0 0 17 16"><path d="M4 0.5h8l3 3v11H4z" fill="#fff" stroke="#80808A"/><rect x="7" y="3" width="6" height="5" fill="#8AB4E8"/><circle cx="6" cy="11" r="4.5" fill="#2E9A2E"/><path d="M3.5 11l2 2 3.5-4" stroke="#fff" stroke-width="1.5" fill="none"/></svg>
<svg style="left:150px;top:347px" width="17" height="16" viewBox="0 0 17 16"><path d="M4 0.5h8l3 3v11H4z" fill="#fff" stroke="#80808A"/><rect x="7" y="3" width="6" height="5" fill="#8AB4E8"/><circle cx="6" cy="11" r="4.5" fill="#2E9A2E"/><path d="M3.5 11l2 2 3.5-4" stroke="#fff" stroke-width="1.5" fill="none"/></svg>
<svg style="left:150px;top:364px" width="17" height="16" viewBox="0 0 17 16"><path d="M4 0.5h8l3 3v11H4z" fill="#fff" stroke="#80808A"/><rect x="7" y="3" width="6" height="5" fill="#8AB4E8"/><circle cx="6" cy="11" r="4.5" fill="#2E9A2E"/><path d="M3.5 11l2 2 3.5-4" stroke="#fff" stroke-width="1.5" fill="none"/></svg>
<svg style="left:150px;top:381px" width="17" height="16" viewBox="0 0 17 16"><path d="M4 0.5h8l3 3v11H4z" fill="#fff" stroke="#80808A"/><rect x="7" y="3" width="6" height="5" fill="#8AB4E8"/><circle cx="6" cy="11" r="4.5" fill="#2E9A2E"/><path d="M3.5 11l2 2 3.5-4" stroke="#fff" stroke-width="1.5" fill="none"/></svg>
<svg style="left:0;top:0" width="0" height="0"><defs><linearGradient id="gdoc" x1="0" y1="0" x2="1" y2="1"><stop offset="0" stop-color="#FFFFFF"/><stop offset="1" stop-color="#C8D8F4"/></linearGradient><radialGradient id="gclk" cx="0.4" cy="0.35" r="0.7"><stop offset="0" stop-color="#FFFFFF"/><stop offset="1" stop-color="#A8D4F0"/></radialGradient><linearGradient id="gscr" x1="0" y1="0" x2="1" y2="1"><stop offset="0" stop-color="#B8ECFF"/><stop offset="0.6" stop-color="#4AAEF0"/><stop offset="1" stop-color="#2A7ADC"/></linearGradient><linearGradient id="gfld" x1="0" y1="0" x2="0" y2="1"><stop offset="0" stop-color="#FFF2A8"/><stop offset="1" stop-color="#F0C040"/></linearGradient><radialGradient id="gglb" cx="0.35" cy="0.3" r="0.8"><stop offset="0" stop-color="#80E080"/><stop offset="0.35" stop-color="#20A030"/><stop offset="0.55" stop-color="#1A70D8"/><stop offset="1" stop-color="#0A2A90"/></radialGradient><linearGradient id="gtow" x1="0" y1="0" x2="1" y2="0"><stop offset="0" stop-color="#F0F0FA"/><stop offset="1" stop-color="#8A88C8"/></linearGradient><linearGradient id="gdesk" x1="0" y1="0" x2="1" y2="1"><stop offset="0" stop-color="#5AA8F0"/><stop offset="1" stop-color="#0A4AB8"/></linearGradient></defs></svg>
<svg style="left:82px;top:314px" width="32" height="32" viewBox="0 0 32 32"><path d="M0.5 0.5h16l5.5 5.5v23H0.5z" fill="url(#gdoc)" stroke="#8AA0C8"/><path d="M16.5 0.5v5.5h5.5" fill="#4A90E0"/><path d="M3 9h13M3 12h9M3 15h7M3 18h6M3 21h6M3 24h6" stroke="#A8C4EC" stroke-width="1.2"/><circle cx="19" cy="19.6" r="10" fill="url(#gclk)" stroke="#6A7480" stroke-width="1.6"/><circle cx="19" cy="19.6" r="8.6" fill="none" stroke="#E8EEF4" stroke-width="0.8"/><path d="M19 19.6l5-5M19 19.6h4" stroke="#1A3040" stroke-width="1.6"/><g fill="#E89060"><rect x="18.5" y="11" width="1.2" height="1.5"/><rect x="18.5" y="27" width="1.2" height="1.5"/><rect x="10.5" y="19" width="1.5" height="1.2"/><rect x="26.5" y="19" width="1.5" height="1.2"/></g></svg>
<div class="t" style="left:38px;top:349px;width:120px;text-align:center;line-height:13px">Poslední</div>
<div class="t" style="left:38px;top:362px;width:120px;text-align:center;line-height:13px">dokumenty</div>
<svg style="left:82px;top:379px" width="32" height="32" viewBox="0 0 32 32"><path d="M0.5 4L29 0.5 30.5 26 1.5 30z" fill="url(#gdesk)" stroke="#0A3A98"/><path d="M5 7l7-2.5 12-1 4 5 0.5 12-4 6-13 1.5-6-4z" fill="#FFF8D8"/><path d="M9 9l11-1.5 0.5 13-11 1.5z" fill="#DCF0FF" stroke="#6AA0D0"/><path d="M14 14.5l13-5" stroke="#4A8AE0" stroke-width="2.5"/><circle cx="28" cy="9" r="2.2" fill="#D04020"/><circle cx="13.5" cy="15" r="0.9" fill="#000"/></svg>
<div class="t" style="left:38px;top:414px;width:120px;text-align:center;line-height:13px">Plocha</div>
<svg style="left:82px;top:444px" width="32" height="32" viewBox="0 0 32 32"><path d="M1.5 10l8-2 4 4-4 18-7 0.5z" fill="url(#gfld)" stroke="#B08A30"/><path d="M11 8.5l8.5-7 10 10-8.5 7z" fill="#C8DDF8" stroke="#7A9AC8"/><path d="M14 8l5.5-4.5 7 7" fill="none" stroke="#A0BCE8" stroke-dasharray="1 1"/><path d="M2 30.5l6-13 21.5-4-6 14z" fill="url(#gfld)" stroke="#B08A30"/><path d="M17 15.5l6-1.5-3 6z" fill="#A8D8F8"/></svg>
<div class="t" style="left:38px;top:478px;width:120px;text-align:center;line-height:13px">Dokumenty</div>
<svg style="left:82px;top:509px" width="32" height="32" viewBox="0 0 32 32"><path d="M17 1l10 0.5 5 3v21l-6 1.5-9-3z" fill="url(#gtow)" stroke="#7070A8"/><path d="M22 8l6-1M22 11l6-1M22 14l6-1M22 17l6-1" stroke="#A0A0D0"/><ellipse cx="10" cy="27" rx="9.5" ry="4" fill="#E8E8F4" stroke="#9090B8"/><rect x="8" y="20" width="5" height="7" fill="#9A98D0"/><path d="M1 3.5l17.5-2.5 2 20L2.5 24z" fill="url(#gscr)" stroke="#8888B8"/></svg>
<div class="t" style="left:38px;top:543px;width:120px;text-align:center;line-height:13px">Tento počítač</div>
<svg style="left:82px;top:574px" width="32" height="32" viewBox="0 0 32 32"><circle cx="8" cy="10.5" r="8.5" fill="url(#gglb)"/><ellipse cx="21.5" cy="26.5" rx="9.5" ry="4" fill="#E8E8F4" stroke="#9090B8"/><rect x="19" y="20" width="5" height="6" fill="#9A98D0"/><path d="M11.8 4l19-3.5 1 20.5-19 3.5z" fill="url(#gscr)" stroke="#8888B8"/></svg>
<div class="t" style="left:38px;top:608px;width:120px;text-align:center;line-height:13px">Místa v síti</div>
<div class="t" style="left:150px;top:580px">Název souboru:</div>
<div class="t" style="left:150px;top:605px">Soubory typu:</div>
<div class="rb" style="left:523px;top:574px;width:75px;height:23px"></div><div class="t" style="left:523px;top:579px;width:75px;text-align:center;color:#000">Import</div>
<div class="rb" style="left:523px;top:600px;width:75px;height:23px"></div><div class="t" style="left:523px;top:605px;width:75px;text-align:center;color:#000">Storno</div>
<div class="a" style="left:164px;top:248px;width:344px;height:452px;border-radius:7px 7px 0 0;background:#0842DB;box-shadow:inset 1px 0 #0019CF,inset -1px 0 #001EA0,inset 0 -1px #001EA0"></div>
<div class="a" style="left:164px;top:248px;width:344px;height:29px;border-radius:7px 7px 0 0;background:linear-gradient(to bottom,#3D95FF 0px,#0A66F7 3px,#0058EE 8px,#0055EA 18px,#0A5FF4 23px,#0853E4 26px,#0040C8 29px)"></div>
<div class="a" style="left:167px;top:277px;width:338px;height:420px;background:#ECE9D8;box-shadow:inset 1px 1px #E4ECFC"></div>
<div class="t" style="left:171px;top:255px;font-size:13px;font-weight:bold;color:#fff;line-height:16px;text-shadow:1px 1px #0A1E8A">Gerber Options</div>
<div class="a" style="left:482px;top:253px;width:21px;height:21px;border-radius:3px;border:1px solid #fff;background:linear-gradient(135deg,#F08A6A,#D8502E 60%,#C03A1A)"></div>
<svg style="left:482px;top:253px" width="21" height="21" viewBox="0 0 21 21"><path d="M6 6L15 15M15 6L6 15" stroke="#fff" stroke-width="2"/></svg>
<div class="a" style="left:175px;top:286px;width:169px;height:17px;background:#ECE9D8;border-radius:2px 2px 0 0;box-shadow:inset 1px 1px #FFF,inset -1px 0 #716F64,inset -2px 0 #ACA899"></div><div class="t" style="left:175px;top:289px;width:169px;text-align:center">RS274-X Options</div>
<div class="a" style="left:344px;top:286px;width:154px;height:17px;background:#ECE9D8;border-radius:2px 2px 0 0;box-shadow:inset 1px 1px #FFF,inset -1px 0 #716F64,inset -2px 0 #ACA899"></div><div class="t" style="left:344px;top:289px;width:154px;text-align:center">Auto Features</div>
<div class="a" style="left:327px;top:303px;width:171px;height:20px;background:#ECE9D8;border-radius:2px 2px 0 0;box-shadow:inset 1px 1px #FFF,inset -1px 0 #716F64,inset -2px 0 #ACA899"></div><div class="t" style="left:327px;top:306px;width:171px;text-align:center">File Interpretation</div>
<div class="a" style="left:173px;top:322px;width:327px;height:339px;background:#ECE9D8;box-shadow:inset 1px 1px #FFF,inset -1px -1px #716F64,inset -2px -2px #ACA899"></div>
<div class="a" style="left:173px;top:303px;width:154px;height:21px;background:#ECE9D8;border-radius:2px 2px 0 0;box-shadow:inset 1px 1px #FFF,inset -1px 0 #716F64,inset -2px 0 #ACA899"></div>
<div class="t" style="left:173px;top:306px;width:154px;text-align:center">Data Format</div>
<div class="t" style="left:180px;top:340px;width:112px;text-align:right">Left of decimal:</div>
<div class="t" style="left:180px;top:364px;width:112px;text-align:right">Right of decimal:</div>
<div class="sk" style="left:297px;top:338px;width:52px;height:19px"></div><div class="a" style="left:300px;top:341px;width:30px;height:13px;background:#316AC5"></div><div class="t" style="left:301px;top:341px;color:#fff">3</div><div class="rb" style="left:331px;top:340px;width:16px;height:15px"></div><svg style="left:331px;top:340px" width="16" height="15" viewBox="0 0 16 15"><path d="M4 6h7l-3.5 4z" fill="#000"/></svg>
<div class="sk" style="left:297px;top:362px;width:52px;height:19px"></div><div class="t" style="left:301px;top:366px">5</div><div class="rb" style="left:331px;top:364px;width:16px;height:15px"></div><svg style="left:331px;top:364px" width="16" height="15" viewBox="0 0 16 15"><path d="M4 6h7l-3.5 4z" fill="#000"/></svg>
<div class="etch" style="left:192px;top:396px;width:223px;height:33px"></div><div class="t" style="left:199px;top:390px;padding:0 2px;background:#ECE9D8">Omit Zeros</div><svg style="left:201px;top:406px" width="13" height="13" viewBox="0 0 13 13"><circle cx="6" cy="6" r="5.5" fill="#fff"/><path d="M1.6 9.4A5.5 5.5 0 0 1 9.4 1.6" stroke="#808080" stroke-width="1.3" fill="none"/><path d="M2.8 8.4A4.2 4.2 0 0 1 8.4 2.8" stroke="#E0DED4" stroke-width="0.8" fill="none"/></svg><div class="t" style="left:218px;top:406px">Trailing</div><svg style="left:291px;top:406px" width="13" height="13" viewBox="0 0 13 13"><circle cx="6" cy="6" r="5.5" fill="#fff"/><path d="M1.6 9.4A5.5 5.5 0 0 1 9.4 1.6" stroke="#808080" stroke-width="1.3" fill="none"/><path d="M2.8 8.4A4.2 4.2 0 0 1 8.4 2.8" stroke="#E0DED4" stroke-width="0.8" fill="none"/><circle cx="6" cy="6" r="2" fill="#000"/></svg><div class="t" style="left:308px;top:406px">Leading</div>
<div class="etch" style="left:192px;top:445px;width:223px;height:33px"></div><div class="t" style="left:199px;top:439px;padding:0 2px;background:#ECE9D8">Position Coordinates</div><svg style="left:201px;top:455px" width="13" height="13" viewBox="0 0 13 13"><circle cx="6" cy="6" r="5.5" fill="#fff"/><path d="M1.6 9.4A5.5 5.5 0 0 1 9.4 1.6" stroke="#808080" stroke-width="1.3" fill="none"/><path d="M2.8 8.4A4.2 4.2 0 0 1 8.4 2.8" stroke="#E0DED4" stroke-width="0.8" fill="none"/></svg><div class="t" style="left:218px;top:455px">Incremental</div><svg style="left:291px;top:455px" width="13" height="13" viewBox="0 0 13 13"><circle cx="6" cy="6" r="5.5" fill="#fff"/><path d="M1.6 9.4A5.5 5.5 0 0 1 9.4 1.6" stroke="#808080" stroke-width="1.3" fill="none"/><path d="M2.8 8.4A4.2 4.2 0 0 1 8.4 2.8" stroke="#E0DED4" stroke-width="0.8" fill="none"/><circle cx="6" cy="6" r="2" fill="#000"/></svg><div class="t" style="left:308px;top:455px">Absolute</div>
<div class="etch" style="left:192px;top:494px;width:223px;height:33px"></div><div class="t" style="left:199px;top:488px;padding:0 2px;background:#ECE9D8">Units</div><svg style="left:201px;top:504px" width="13" height="13" viewBox="0 0 13 13"><circle cx="6" cy="6" r="5.5" fill="#fff"/><path d="M1.6 9.4A5.5 5.5 0 0 1 9.4 1.6" stroke="#808080" stroke-width="1.3" fill="none"/><path d="M2.8 8.4A4.2 4.2 0 0 1 8.4 2.8" stroke="#E0DED4" stroke-width="0.8" fill="none"/><circle cx="6" cy="6" r="2" fill="#000"/></svg><div class="t" style="left:218px;top:504px">English</div><svg style="left:291px;top:504px" width="13" height="13" viewBox="0 0 13 13"><circle cx="6" cy="6" r="5.5" fill="#fff"/><path d="M1.6 9.4A5.5 5.5 0 0 1 9.4 1.6" stroke="#808080" stroke-width="1.3" fill="none"/><path d="M2.8 8.4A4.2 4.2 0 0 1 8.4 2.8" stroke="#E0DED4" stroke-width="0.8" fill="none"/></svg><div class="t" style="left:308px;top:504px">Metric</div>
<div class="etch" style="left:192px;top:542px;width:223px;height:33px"></div><div class="t" style="left:199px;top:536px;padding:0 2px;background:#ECE9D8">Character Coding</div><svg style="left:201px;top:552px" width="13" height="13" viewBox="0 0 13 13"><circle cx="6" cy="6" r="5.5" fill="#fff"/><path d="M1.6 9.4A5.5 5.5 0 0 1 9.4 1.6" stroke="#808080" stroke-width="1.3" fill="none"/><path d="M2.8 8.4A4.2 4.2 0 0 1 8.4 2.8" stroke="#E0DED4" stroke-width="0.8" fill="none"/><circle cx="6" cy="6" r="2" fill="#000"/></svg><div class="t" style="left:218px;top:552px">ASCII</div><svg style="left:253px;top:552px" width="13" height="13" viewBox="0 0 13 13"><circle cx="6" cy="6" r="5.5" fill="#fff"/><path d="M1.6 9.4A5.5 5.5 0 0 1 9.4 1.6" stroke="#808080" stroke-width="1.3" fill="none"/><path d="M2.8 8.4A4.2 4.2 0 0 1 8.4 2.8" stroke="#E0DED4" stroke-width="0.8" fill="none"/></svg><div class="t" style="left:270px;top:552px">EBCDIC</div><svg style="left:321px;top:552px" width="13" height="13" viewBox="0 0 13 13"><circle cx="6" cy="6" r="5.5" fill="#fff"/><path d="M1.6 9.4A5.5 5.5 0 0 1 9.4 1.6" stroke="#808080" stroke-width="1.3" fill="none"/><path d="M2.8 8.4A4.2 4.2 0 0 1 8.4 2.8" stroke="#E0DED4" stroke-width="0.8" fill="none"/></svg><div class="t" style="left:338px;top:552px">EIA RS-244</div>
<div class="etch" style="left:192px;top:591px;width:223px;height:33px"></div><div class="t" style="left:199px;top:585px;padding:0 2px;background:#ECE9D8">Arc Interpretation</div><svg style="left:201px;top:601px" width="13" height="13" viewBox="0 0 13 13"><circle cx="6" cy="6" r="5.5" fill="#fff"/><path d="M1.6 9.4A5.5 5.5 0 0 1 9.4 1.6" stroke="#808080" stroke-width="1.3" fill="none"/><path d="M2.8 8.4A4.2 4.2 0 0 1 8.4 2.8" stroke="#E0DED4" stroke-width="0.8" fill="none"/></svg><div class="t" style="left:218px;top:601px">Quadrant</div><svg style="left:291px;top:601px" width="13" height="13" viewBox="0 0 13 13"><circle cx="6" cy="6" r="5.5" fill="#fff"/><path d="M1.6 9.4A5.5 5.5 0 0 1 9.4 1.6" stroke="#808080" stroke-width="1.3" fill="none"/><path d="M2.8 8.4A4.2 4.2 0 0 1 8.4 2.8" stroke="#E0DED4" stroke-width="0.8" fill="none"/><circle cx="6" cy="6" r="2" fill="#000"/></svg><div class="t" style="left:308px;top:601px">360 Degree</div>
<div class="a" style="left:262px;top:667px;width:75px;height:23px;background:#ECE9D8;border:1px solid #000;box-shadow:inset 1px 1px #FFF,inset -1px -1px #716F64,inset -2px -2px #ACA899"></div><div class="t" style="left:262px;top:672px;width:75px;text-align:center;color:#000">OK</div>
<div class="rb" style="left:343px;top:667px;width:75px;height:23px"></div><div class="t" style="left:343px;top:672px;width:75px;text-align:center;color:#000">Storno</div>
<div class="rb" style="left:424px;top:667px;width:75px;height:23px"></div><div class="t" style="left:424px;top:672px;width:75px;text-align:center;color:#ACA899">Použít</div>
</body></html>
